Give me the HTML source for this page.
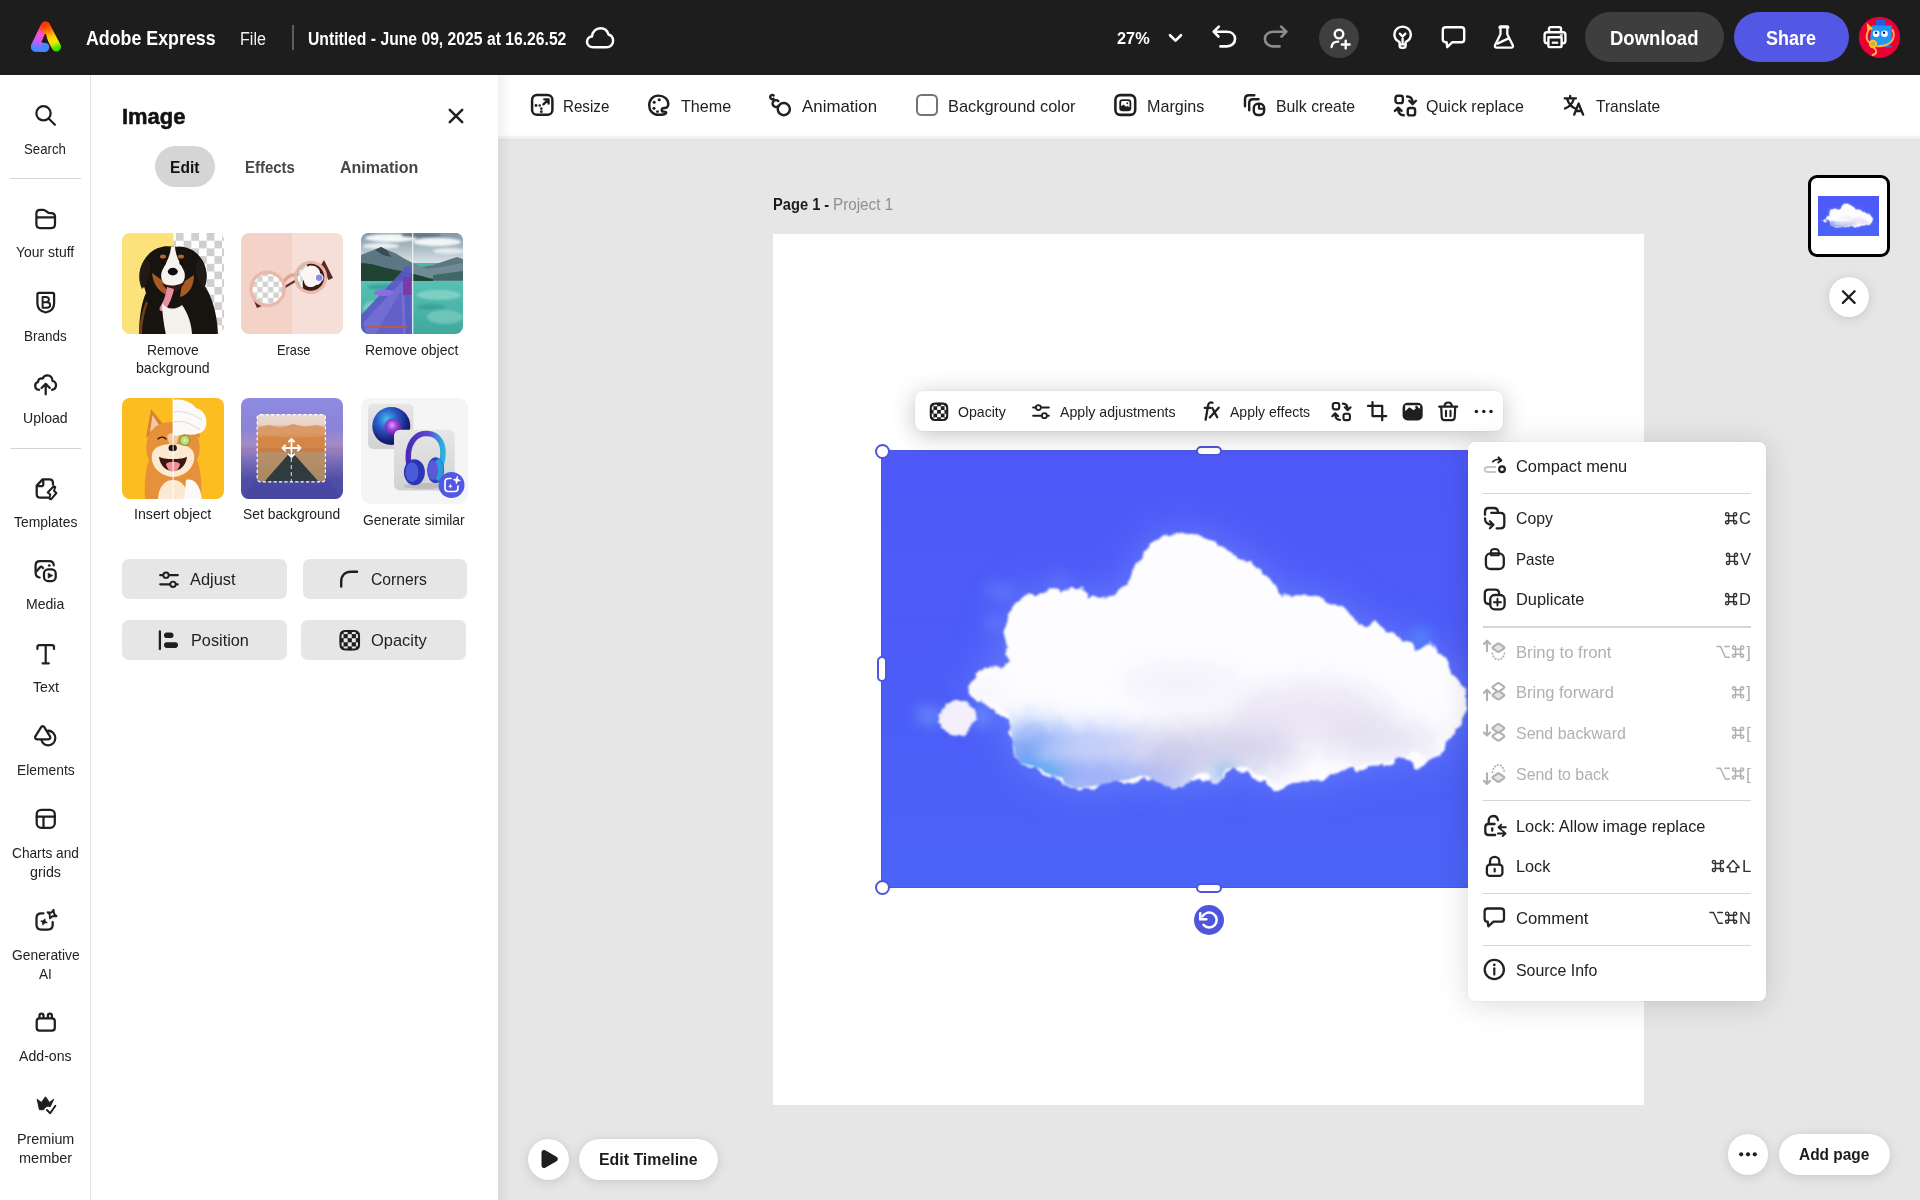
<!DOCTYPE html>
<html lang="en">
<head>
<meta charset="utf-8">
<title>Adobe Express</title>
<style>
*{box-sizing:border-box;margin:0;padding:0}
html,body{width:1920px;height:1200px;overflow:hidden}
body{position:relative;background:#e6e6e6;font-family:"Liberation Sans",sans-serif;color:#222;-webkit-font-smoothing:antialiased}
.abs{position:absolute}
svg{display:block;overflow:visible}
.t{position:absolute;white-space:nowrap;line-height:1}
/* top bar */
#topbar{position:absolute;left:0;top:0;width:1920px;height:75px;background:#1d1d1d}
#topbar .t{color:#fff}
/* sidebar */
#side{position:absolute;left:0;top:75px;width:91px;height:1125px;background:#fff;border-right:1px solid #e3e3e3}
.sl{position:absolute;left:0;width:90px;text-align:center;font-size:14.5px;line-height:19px;color:#222;letter-spacing:-0.25px}
.sdiv{position:absolute;left:10px;width:71px;height:1px;background:#d5d5d5}
.sic{position:absolute;left:33px;width:24px;height:24px}
/* panel */
#panel{position:absolute;left:91px;top:75px;width:407px;height:1125px;background:#fff}
.thumb{position:absolute;width:102px;height:102px;border-radius:8px;overflow:hidden}
.tl{position:absolute;text-align:center;font-size:14.5px;line-height:19px;color:#222;letter-spacing:-0.25px}
.pbtn{position:absolute;height:40px;background:#e6e6e6;border-radius:7px}

/* toolbar */
#tbar{position:absolute;left:498px;top:75px;width:1422px;height:63.500px;background:linear-gradient(to bottom,#fff 0,#fff 60px,#f3f3f3 61.500px,#efefef 63.500px);box-shadow:0 1px 2px rgba(0,0,0,.04)}

/* canvas */
#page{position:absolute;left:773px;top:234px;width:871px;height:871px;background:#fff}
/* floating bar */
#fbar{position:absolute;left:915px;top:391px;width:588px;height:40px;background:#fff;border-radius:8px;box-shadow:0 4px 24px rgba(0,0,0,.24),0 0 2px rgba(0,0,0,.10)}

/* menu */
#menu{position:absolute;left:1468px;top:442px;width:298px;height:559px;background:#fff;border-radius:7px;box-shadow:0 3px 30px rgba(0,0,0,.15),0 0 2px rgba(0,0,0,.10)}

.mdiv{position:absolute;left:15px;width:268px;height:1px;background:#d6d6d6}
.pill{position:absolute;background:#fff;border-radius:20.500px;box-shadow:0 2px 12px rgba(0,0,0,.13),0 0 2px rgba(0,0,0,.05)}
</style>
</head>
<body>

<!-- ================= TOP BAR ================= -->
<div id="topbar">
<svg class="abs" style="left:28px;top:18px;" width="36" height="37" viewBox="28 18 36 37">
<defs>
<linearGradient id="lgL" x1="45" y1="21" x2="36" y2="52" gradientUnits="userSpaceOnUse">
<stop offset="0" stop-color="#ff2400"/><stop offset=".18" stop-color="#ff3a3a"/><stop offset=".42" stop-color="#ff4fd0"/><stop offset=".68" stop-color="#c45bff"/><stop offset=".9" stop-color="#4a86ff"/><stop offset="1" stop-color="#2f8fff"/></linearGradient>
<linearGradient id="lgR" x1="46" y1="21" x2="58" y2="51" gradientUnits="userSpaceOnUse">
<stop offset="0" stop-color="#ff2400"/><stop offset=".28" stop-color="#ff6a00"/><stop offset=".52" stop-color="#ffd000"/><stop offset=".72" stop-color="#e8ee00"/><stop offset=".9" stop-color="#4ce000"/><stop offset="1" stop-color="#22d800"/></linearGradient>
<linearGradient id="lgB" x1="31" y1="48" x2="49" y2="48" gradientUnits="userSpaceOnUse">
<stop offset="0" stop-color="#c45bff"/><stop offset=".5" stop-color="#5a80ff"/><stop offset="1" stop-color="#2f8fff"/></linearGradient>
</defs>
<path d="M45.5 26.2 L35.6 46.9 L44.6 47.2" fill="none" stroke="url(#lgL)" stroke-width="9.4" stroke-linejoin="round" stroke-linecap="round"/>
<path d="M36 47.3 L44.4 47.5" fill="none" stroke="url(#lgB)" stroke-width="8.6" stroke-linecap="round"/>
<path d="M45.5 26.2 L35.6 46.9" fill="none" stroke="url(#lgL)" stroke-width="9.4" stroke-linecap="round"/>
<path d="M45.5 26.2 L56.4 46.9" fill="none" stroke="url(#lgR)" stroke-width="9.4" stroke-linecap="round"/>
<path d="M45.4 34 L41.9 42 L47.9 42.9 Z" fill="#1d1d1d" stroke="#1d1d1d" stroke-width="1" stroke-linejoin="round"/>
</svg>
<span class="t" style="left:85.7px;top:28px;font-size:20.5px;font-weight:700;color:#fff;transform:scaleX(0.8684);transform-origin:0 0;">Adobe Express</span>
<span class="t" style="left:240.4px;top:30px;font-size:18px;color:#f0f0f0;transform:scaleX(0.8937);transform-origin:0 0;">File</span>
<div class="abs" style="left:292px;top:25px;width:1.5px;height:25px;background:#5c5c5c"></div>
<span class="t" style="left:308.4px;top:31px;font-size:17.5px;font-weight:700;color:#fff;transform:scaleX(0.8973);transform-origin:0 0;">Untitled - June 09, 2025 at 16.26.52</span>
<svg class="abs" style="left:585px;top:25px;" width="30" height="25" viewBox="0 0 30 25"><path d="M8.2 22.3 C4.3 22.3 2 19.8 2 16.8 C2 13.9 4.2 11.7 7 11.5 C7.3 7 10.8 3.3 15.4 3.3 C19.3 3.3 22.5 5.9 23.5 9.5 C26.3 10.3 28.1 12.7 28.1 15.7 C28.1 19.4 25.3 22.3 21.6 22.3 Z" fill="none" stroke="#fff" stroke-width="2.500" stroke-linejoin="round"/></svg>
<span class="t" style="left:1116.7px;top:30px;font-size:16.5px;font-weight:700;color:#fff;transform:scaleX(0.9879);transform-origin:0 0;">27%</span>
<svg class="abs" style="left:1167px;top:32px;" width="17" height="12" viewBox="0 0 17 12"><path d="M3 3.2 L8.5 8.6 L14 3.2" fill="none" stroke="#fff" stroke-width="2.600" stroke-linecap="round" stroke-linejoin="round"/></svg>
<svg class="abs" style="left:1212px;top:25px;" width="25" height="23" viewBox="0 0 24.5 23"><path d="M6.6 1.6 L1.4 6.6 L6.2 11.6 M1.8 6.8 H14.5 C19.2 6.8 22.8 9.6 22.8 14 C22.8 18.4 19.2 21.4 14.5 21.4 H8.2" fill="none" stroke="#fff" stroke-width="2.600" stroke-linecap="round" stroke-linejoin="round"/></svg>
<svg class="abs" style="left:1263px;top:25px;" width="25" height="23" viewBox="0 0 24.5 23"><g transform="translate(24.5 0) scale(-1 1)"><path d="M6.6 1.6 L1.4 6.6 L6.2 11.6 M1.8 6.8 H14.5 C19.2 6.8 22.8 9.6 22.8 14 C22.8 18.4 19.2 21.4 14.5 21.4 H8.2" fill="none" stroke="#8c8c8c" stroke-width="2.600" stroke-linecap="round" stroke-linejoin="round"/></g></svg>
<div class="abs" style="left:1319px;top:17.5px;width:40px;height:40px;border-radius:20px;background:#3f3f3f"></div>
<svg class="abs" style="left:1327px;top:26px;" width="24" height="24" viewBox="0 0 24 24"><circle cx="12" cy="8.1" r="4.3" fill="none" stroke="#fff" stroke-width="2.400"/><path d="M4.6 21 C4.9 17.6 7.6 15.6 11.2 15.6" fill="none" stroke="#fff" stroke-width="2.400" stroke-linecap="round"/><path d="M18.7 14.6 V22.4 M14.8 18.5 H22.6" stroke="#fff" stroke-width="2.400" stroke-linecap="round"/></svg>
<svg class="abs" style="left:1391px;top:24px;" width="24" height="26" viewBox="0 0 24 26"><path d="M8.6 18.2 C5.2 16.6 3.4 14 3.4 10.6 C3.4 6 7 2.6 11.6 2.6 C16.2 2.6 19.8 6 19.8 10.6 C19.8 14 18 16.6 14.6 18.2 V21.6 C14.6 22.9 13.6 23.9 12.3 23.9 H10.9 C9.6 23.9 8.6 22.9 8.6 21.6 Z" fill="none" stroke="#fff" stroke-width="2.400" stroke-linejoin="round"/><path d="M8.8 9.6 L11.6 12.6 L14.4 9.6 M11.6 12.6 V18.6 M9 20.3 H14.2" fill="none" stroke="#fff" stroke-width="2.300" stroke-linecap="round"/></svg>
<svg class="abs" style="left:1440px;top:24px;" width="27" height="26" viewBox="0 0 27 26"><path d="M5.6 3.2 H21.4 C23.1 3.2 24.2 4.3 24.2 6 V15.4 C24.2 17.1 23.1 18.2 21.4 18.2 H12.4 L7.2 23.2 L6.6 18.2 H5.6 C3.9 18.2 2.8 17.1 2.8 15.4 V6 C2.8 4.3 3.9 3.2 5.6 3.2 Z" fill="none" stroke="#fff" stroke-width="2.400" stroke-linejoin="round"/></svg>
<svg class="abs" style="left:1492px;top:24px;" width="24" height="26" viewBox="0 0 24 26"><path d="M8.6 2.4 H15.2 C15.9 2.4 16.3 2.8 16.3 3.4 C16.3 4 15.9 4.4 15.3 4.5 V10.2 L20.8 21.2 C21.4 22.5 20.6 23.7 19.2 23.7 H4.6 C3.2 23.7 2.4 22.5 3 21.2 L8.5 10.2 V4.5 C7.9 4.4 7.5 4 7.5 3.4 C7.500 2.8 7.9 2.4 8.6 2.4 Z" fill="none" stroke="#fff" stroke-width="2.300" stroke-linejoin="round"/><path d="M8.6 2.5 H15.2 V4.4 H8.6 Z" fill="#fff"/><path d="M5.4 19.6 L16.6 14.4" stroke="#fff" stroke-width="2.300" stroke-linecap="round"/></svg>
<svg class="abs" style="left:1542px;top:24px;" width="26" height="26" viewBox="0 0 26 26"><path d="M7 8.2 V4.6 C7 3.7 7.6 3.1 8.5 3.1 H17.500 C18.4 3.1 19 3.700 19 4.6 V8.2" fill="none" stroke="#fff" stroke-width="2.400"/><path d="M6.2 19.2 H5 C3.600 19.2 2.600 18.2 2.600 16.8 V10.8 C2.600 9.3 3.600 8.300 5 8.300 H21 C22.4 8.300 23.400 9.3 23.400 10.8 V16.8 C23.400 18.2 22.4 19.2 21 19.2 H19.8" fill="none" stroke="#fff" stroke-width="2.400"/><path d="M6.400 13.2 H19.600 V21.800 C19.600 22.6 19.1 23.1 18.300 23.1 H7.700 C6.900 23.1 6.400 22.6 6.400 21.800 Z" fill="none" stroke="#fff" stroke-width="2.400" stroke-linejoin="round"/><path d="M9.8 17.6 H16.2 V19.8 H9.8 Z" fill="#fff"/><path d="M18.4 11 H20.4" stroke="#fff" stroke-width="1.600" stroke-linecap="round"/></svg>
<div class="abs" style="left:1585px;top:12px;width:139px;height:50px;border-radius:25px;background:#3e3e3e"></div>
<span class="t" style="left:1610.4px;top:29px;font-size:19.5px;font-weight:700;color:#fff;transform:scaleX(0.9494);transform-origin:0 0;">Download</span>
<div class="abs" style="left:1734px;top:12px;width:115px;height:50px;border-radius:25px;background:#5258e4"></div>
<span class="t" style="left:1766.4px;top:29px;font-size:19.5px;font-weight:700;color:#fff;transform:scaleX(0.9205);transform-origin:0 0;">Share</span>
<svg class="abs" style="left:1858px;top:16px;" width="43" height="43" viewBox="1858 16 43 43">
<circle cx="1879.5" cy="37.3" r="20.6" fill="#ea0034"/>
<path d="M1876.2 19.9 H1885.4 L1886.3 25.800 H1875.4 Z" fill="#1d5fe6"/>
<path d="M1871.6 25.4 H1891.8 V38 C1891.8 43 1886 46.8 1879 46.3 L1870 40.5 Z" fill="#2196f3"/>
<path d="M1884.5 45.600 H1891.4 V47.200 H1884.5 Z" fill="#3b78e8"/>
<circle cx="1876.2" cy="33.7" r="3.3" fill="#fff"/><circle cx="1884.5" cy="33.7" r="3.3" fill="#fff"/>
<circle cx="1876" cy="32.8" r="1.25" fill="#0a1f8f"/><circle cx="1884" cy="32.8" r="1.25" fill="#0a1f8f"/>
<path d="M1866.7 22.8 L1873 28.7 L1867.4 31.2 Z" fill="#ffd21a"/>
<path d="M1868.3 30.5 C1865.8 35 1866 40.500 1869.8 42.8" fill="none" stroke="#ffb347" stroke-width="1.900" stroke-linecap="round"/>
<circle cx="1873" cy="44" r="3.200" fill="#c9b23a" stroke="#ffc12e" stroke-width="1.900"/>
<path d="M1873.6 47.500 C1877.5 50.500 1877 54 1872.6 55" fill="none" stroke="#ffb347" stroke-width="1.900" stroke-linecap="round"/>
<path d="M1892.6 30 C1895.5 36 1893 42.500 1886 45 C1883 46 1880 46.3 1877 46.200" fill="none" stroke="#ffb347" stroke-width="1.900" stroke-linecap="round"/>
</svg>
</div>

<!-- ================= SIDEBAR ================= -->
<div id="side">
<svg class="abs" style="left:30px;top:25px;" width="30" height="30" viewBox="30 100 30 30"><circle cx="43.5" cy="113.3" r="7.15" fill="none" stroke="#1f1f1f" stroke-width="2.25"/><path d="M48.9 118.7 L54.9 124.7" fill="none" stroke="#1f1f1f" stroke-width="2.25" stroke-linecap="round" stroke-linejoin="round" /></svg>
<span class="t" style="left:24.4px;top:66px;font-size:15px;color:#222;transform:scaleX(0.8812);transform-origin:0 0;">Search</span>
<div class="sdiv" style="top:103px"></div>
<svg class="abs" style="left:30px;top:130px;" width="30" height="28" viewBox="30 205 30 28"><path d="M36.4 217.2 V213.6 C36.4 211.3 37.9 209.8 40.200 209.8 H43.200 C44.5 209.8 45.200 210.3 46.100 211.1 C47.5 212.400 48.100 213.1 49.700 213.1 H51.200 C53.500 213.1 55 214.6 55 216.9 V224.200 C55 226.5 53.500 228 51.200 228 H40.200 C37.9 228 36.4 226.500 36.4 224.200 Z M36.4 217.3 H55" fill="none" stroke="#1f1f1f" stroke-width="2.25" stroke-linecap="round" stroke-linejoin="round" /></svg>
<span class="t" style="left:16.4px;top:169px;font-size:15px;color:#222;transform:scaleX(0.9297);transform-origin:0 0;">Your stuff</span>
<svg class="abs" style="left:30px;top:213px;" width="30" height="30" viewBox="30 288 30 30"><path d="M39 292.8 H52.500 C53.500 292.8 54.100 293.400 54.100 294.4 V303.6 C54.100 308.500 50.500 311.600 45.750 312.500 C41 311.600 37.400 308.500 37.400 303.6 V294.4 C37.400 293.400 38 292.8 39 292.8 Z" fill="none" stroke="#1f1f1f" stroke-width="2.25" stroke-linecap="round" stroke-linejoin="round" /><path d="M42.600 297 V307.800 M42.600 297 H46 C47.800 297 48.900 298.100 48.900 299.600 C48.900 301.100 47.800 302.200 46 302.200 H42.600 M42.600 302.200 H46.900 C48.900 302.200 50.100 303.400 50.100 305 C50.100 306.600 48.900 307.800 46.900 307.800 H42.600 Z" fill="none" stroke="#1f1f1f" stroke-width="1.95" stroke-linecap="round" stroke-linejoin="round" /></svg>
<span class="t" style="left:24.4px;top:253px;font-size:15px;color:#222;transform:scaleX(0.8970);transform-origin:0 0;">Brands</span>
<svg class="abs" style="left:30px;top:295px;" width="30" height="28" viewBox="30 370 30 28"><path d="M39.200 389.800 C36.500 389.800 35.200 387.800 35.200 385.800 C35.200 383.900 36.400 382.400 38.100 381.900 C37.900 379.300 40.300 377.800 42.700 378.600 C43.400 376.600 45.200 375.400 47.500 375.400 C50.400 375.400 52.700 377.700 52.500 381 C54.700 381.300 56 383.100 56 385.300 C56 387.800 54.400 389.500 52 389.800" fill="none" stroke="#1f1f1f" stroke-width="2.25" stroke-linecap="round" stroke-linejoin="round" /><path d="M45.700 394.300 V384.200 M41.600 388 L45.700 383.900 L49.800 388" fill="none" stroke="#1f1f1f" stroke-width="2.25" stroke-linecap="round" stroke-linejoin="round" /></svg>
<span class="t" style="left:23.1px;top:335px;font-size:15px;color:#222;transform:scaleX(0.9390);transform-origin:0 0;">Upload</span>
<div class="sdiv" style="top:372.5px"></div>
<svg class="abs" style="left:30px;top:399px;" width="30" height="30" viewBox="30 474 30 30"><path d="M48 497.700 H40.500 C38.200 497.700 36.700 496.200 36.700 493.900 V485.600 L42.600 479.400 H49.400 C51.700 479.400 53 480.900 53 483.200 V484.600" fill="none" stroke="#1f1f1f" stroke-width="2.25" stroke-linecap="round" stroke-linejoin="round" /><path d="M43.300 480 V484.200 C43.300 485.500 42.600 486.200 41.300 486.200 H37.200" fill="none" stroke="#1f1f1f" stroke-width="2.25" stroke-linecap="round" stroke-linejoin="round" /><path d="M53.700 486.300 L47.700 492.500 L50.300 494.500 L49.300 498.500 L51.100 499.300 L56.400 493 L54 490.700 L55.300 487 Z" fill="none" stroke="#1f1f1f" stroke-width="1.95" stroke-linecap="round" stroke-linejoin="round" /></svg>
<span class="t" style="left:13.9px;top:439px;font-size:15px;color:#222;transform:scaleX(0.9269);transform-origin:0 0;">Templates</span>
<svg class="abs" style="left:30px;top:481px;" width="30" height="30" viewBox="30 556 30 30"><path d="M39.600 577.500 C36.500 577.100 35.600 575.300 35.600 572.800 V565.500 C35.600 562.700 37.200 561.200 40 561.200 H49.300 C52 561.200 53.600 562.600 53.800 565.300" fill="none" stroke="#1f1f1f" stroke-width="2.25" stroke-linecap="round" stroke-linejoin="round" /><path d="M36.300 571.400 L40.100 567.200 C40.800 566.500 41.600 566.500 42.300 567.200 L43 568.100" fill="none" stroke="#1f1f1f" stroke-width="2.25" stroke-linecap="round" stroke-linejoin="round" /><circle cx="49.3" cy="565.500" r="1.35" fill="#1f1f1f"/><rect x="44" y="569.300" width="11.700" height="11.700" rx="4" fill="none" stroke="#1f1f1f" stroke-width="2.25"/><path d="M48.100 573 V578.300 L52.800 575.600 Z" fill="#1f1f1f" stroke="#1f1f1f" stroke-width=".6" stroke-linejoin="round"/></svg>
<span class="t" style="left:26.4px;top:521px;font-size:15px;color:#222;transform:scaleX(0.9377);transform-origin:0 0;">Media</span>
<svg class="abs" style="left:30px;top:565px;" width="30" height="30" viewBox="30 640 30 30"><path d="M37.400 649 V647 C37.400 645.700 38.100 645.100 39.400 645.100 H52 C53.300 645.100 54 645.700 54 647 V649 M45.700 645.100 V663.300 M42.600 663.300 H48.800" fill="none" stroke="#1f1f1f" stroke-width="2.2" stroke-linecap="round" stroke-linejoin="round" /></svg>
<span class="t" style="left:32.6px;top:604px;font-size:15px;color:#222;transform:scaleX(0.9410);transform-origin:0 0;">Text</span>
<svg class="abs" style="left:30px;top:646px;" width="30" height="30" viewBox="30 721 30 30"><path d="M41 727.400 C41.800 725.800 43.600 725.800 44.400 727.400 L50 736.400 C50.800 737.900 50 739.300 48.300 739.300 H37.100 C35.400 739.300 34.600 737.900 35.400 736.400 Z" fill="none" stroke="#1f1f1f" stroke-width="2.25" stroke-linecap="round" stroke-linejoin="round" /><path d="M47.400 730.800 C52.100 730.300 55.300 733.900 55.300 738.300 C55.300 742.200 52.200 745.300 48.300 745.300 C45 745.300 42.300 743.100 41.400 739.800" fill="none" stroke="#1f1f1f" stroke-width="2.25" stroke-linecap="round" stroke-linejoin="round" /></svg>
<span class="t" style="left:16.9px;top:687px;font-size:15px;color:#222;transform:scaleX(0.9217);transform-origin:0 0;">Elements</span>
<svg class="abs" style="left:30px;top:729px;" width="30" height="30" viewBox="30 804 30 30"><rect x="36.700" y="809.800" width="18.100" height="18" rx="4.600" fill="none" stroke="#1f1f1f" stroke-width="2.25"/><path d="M36.700 816.700 H54.800 M43.500 816.700 V827.800" fill="none" stroke="#1f1f1f" stroke-width="2.25" stroke-linecap="round" stroke-linejoin="round" /></svg>
<span class="t" style="left:12.0px;top:770px;font-size:15px;color:#222;transform:scaleX(0.9121);transform-origin:0 0;">Charts and</span>
<span class="t" style="left:30.2px;top:789px;font-size:15px;color:#222;transform:scaleX(0.9524);transform-origin:0 0;">grids</span>
<svg class="abs" style="left:30px;top:830px;" width="30" height="30" viewBox="30 905 30 30"><path d="M43.500 913.300 H41.300 C38.300 913.300 36.500 915.100 36.500 918.100 V924.700 C36.500 927.700 38.300 929.500 41.300 929.500 H47.900 C50.900 929.500 52.700 927.700 52.700 924.700 V922" fill="none" stroke="#1f1f1f" stroke-width="2.25" stroke-linecap="round" stroke-linejoin="round" /><path d="M53.500 909.700 L54.200 914 L56.600 916.200 L52.400 916.200 L50 918.400 L49.700 914.300 L47.500 912.300 L51.500 912.600 Z" fill="none" stroke="#1f1f1f" stroke-width="1.9" stroke-linejoin="round"/><path d="M44.900 919.200 L45.100 921.400 L47 922.700 L44.800 922.800 L42.800 924.700 L42.800 922.400 L41 921 L43.300 920.900 Z" fill="#1f1f1f" stroke="#1f1f1f" stroke-width="1.1" stroke-linejoin="round"/></svg>
<span class="t" style="left:12.0px;top:872px;font-size:15px;color:#222;transform:scaleX(0.9216);transform-origin:0 0;">Generative</span>
<span class="t" style="left:38.7px;top:891px;font-size:15px;color:#222;transform:scaleX(0.9101);transform-origin:0 0;">AI</span>
<svg class="abs" style="left:30px;top:933px;" width="30" height="28" viewBox="30 1008 30 28"><rect x="36.700" y="1018.300" width="18.100" height="12.200" rx="2.800" fill="none" stroke="#1f1f1f" stroke-width="2.25"/><path d="M39.500 1018 V1015.800 C39.500 1014.400 40.300 1013.700 41.500 1013.700 C42.700 1013.700 43.500 1014.400 43.500 1015.800 V1018 M47.900 1018 V1015.800 C47.900 1014.400 48.700 1013.700 49.900 1013.700 C51.100 1013.700 51.900 1014.400 51.900 1015.800 V1018" fill="none" stroke="#1f1f1f" stroke-width="2.25" stroke-linecap="round" stroke-linejoin="round" /></svg>
<span class="t" style="left:19.2px;top:973px;font-size:15px;color:#222;transform:scaleX(0.9414);transform-origin:0 0;">Add-ons</span>
<svg class="abs" style="left:30px;top:1015px;" width="30" height="30" viewBox="30 1090 30 30"><path d="M37.200 1099.200 L41.400 1102.500 L45.500 1096.800 L49.500 1102.500 L53.700 1099.200 L50.200 1106.800 C48.200 1105.800 45.800 1106.300 44.600 1108.300 L43.700 1109.700 H39.400 Z" fill="#1f1f1f" stroke="#1f1f1f" stroke-width="1" stroke-linejoin="round"/><path d="M46.900 1110 L50.200 1113.200 L55.400 1105.700" fill="none" stroke="#1f1f1f" stroke-width="1.9" stroke-linecap="round" stroke-linejoin="round" /></svg>
<span class="t" style="left:16.5px;top:1056px;font-size:15px;color:#222;transform:scaleX(0.9550);transform-origin:0 0;">Premium</span>
<span class="t" style="left:18.9px;top:1075px;font-size:15px;color:#222;transform:scaleX(0.9664);transform-origin:0 0;">member</span>
</div>

<!-- ================= IMAGE PANEL ================= -->
<div id="panel">
<span class="t" style="left:30.9px;top:31px;font-size:22.5px;font-weight:700;color:#111;transform:scaleX(0.9750);transform-origin:0 0;-webkit-text-stroke:0.550px #111;">Image</span>
<svg class="abs" style="left:354px;top:30px;" width="22" height="22" viewBox="445 105 22 22"><path d="M449.8 109.8 L462.2 122.2 M462.2 109.8 L449.8 122.2" fill="none" stroke="#1f1f1f" stroke-width="2.5" stroke-linecap="round" stroke-linejoin="round"/></svg>
<div class="abs" style="left:64px;top:71px;width:60px;height:40.5px;background:#d5d5d5;border-radius:20.500px"></div>
<span class="t" style="left:79.2px;top:84px;font-size:16.5px;font-weight:700;color:#111;transform:scaleX(0.9428);transform-origin:0 0;">Edit</span>
<span class="t" style="left:153.9px;top:84px;font-size:16.5px;font-weight:700;color:#464646;transform:scaleX(0.9068);transform-origin:0 0;">Effects</span>
<span class="t" style="left:249.2px;top:84px;font-size:16.5px;font-weight:700;color:#464646;transform:scaleX(0.9717);transform-origin:0 0;">Animation</span>
<div class="thumb" style="left:31px;top:157.5px;width:101.500px;height:101.500px"><svg width="102" height="102" viewBox="0 0 102 102" style="display:block"><defs><pattern id="ck1" width="15.4" height="15.4" patternUnits="userSpaceOnUse"><rect width="15.4" height="15.4" fill="#ffffff"/><rect x="7.7" width="7.7" height="7.7" fill="#cfcfcf"/><rect y="7.7" width="7.7" height="7.7" fill="#cfcfcf"/></pattern></defs>
<rect width="102" height="102" fill="#fbe27a"/>
<rect x="51.300" width="51" height="102" fill="url(#ck1)"/>
<path d="M21 50 C16 44 18 30 26 22 C33 14 44 12 52 14 C62 12 72 16 78 24 C85 32 86 44 82 52 C90 62 96 84 96 102 H17 C17 84 20 68 24 60 Z" fill="#17130f"/>
<path d="M24 26 C17 32 15 46 20 56 C25 52 28 42 29 32 Z" fill="#221a14"/>
<path d="M77 26 C85 32 87 46 82 56 C77 52 74 42 73 32 Z" fill="#221a14"/>
<path d="M30 40 C31 52 38 60 46 62 L44 50 Z" fill="#a85a24"/>
<path d="M72 42 C72 54 66 62 58 64 L60 50 Z" fill="#a85a24"/>
<ellipse cx="41" cy="23.500" rx="3" ry="2" fill="#b5672a"/><ellipse cx="59" cy="23.500" rx="3" ry="2" fill="#b5672a"/>
<path d="M49 14 C48 24 44 30 40 38 C37 46 42 54 51 54 C60 54 65 46 62 38 C58 30 54 24 53 14 Z" fill="#f7f3ee"/>
<ellipse cx="42" cy="30" rx="2.200" ry="1.900" fill="#120d0a"/><ellipse cx="59.500" cy="30" rx="2.200" ry="1.900" fill="#120d0a"/>
<ellipse cx="50.800" cy="38.600" rx="5" ry="3.800" fill="#0e0b0a"/>
<path d="M40 50 C44 58 50 60 54 58 C58 56 62 52 63 48 C58 53 46 54 40 50 Z" fill="#3a1414"/>
<path d="M45 54 C44 62 41 70 38 74 C36 78 41 80 44 76 C48 70 51 62 52 56 Z" fill="#e98ea0"/>
<path d="M40 70 C44 76 52 78 60 72 C66 80 70 92 70 102 H44 C42 92 40 80 40 70 Z" fill="#f4f0ea"/>
<path d="M26 70 C22 80 20 92 20 102 H17 C17 90 20 78 24 68 Z" fill="#a85a24" opacity=".6"/>
</svg></div>
<div class="thumb" style="left:150px;top:157.5px;width:101.500px;height:101.500px"><svg width="102" height="102" viewBox="0 0 102 102" style="display:block"><defs><pattern id="ck2" width="10.8" height="10.8" patternUnits="userSpaceOnUse"><rect width="10.8" height="10.8" fill="#ffffff"/><rect x="5.4" width="5.4" height="5.4" fill="#d2d2d2"/><rect y="5.4" width="5.4" height="5.4" fill="#d2d2d2"/></pattern>
<clipPath id="t2l"><circle cx="26.600" cy="55.900" r="15"/></clipPath><clipPath id="t2r"><circle cx="69.700" cy="44.300" r="13.500"/></clipPath></defs>
<rect width="102" height="102" fill="#f3d3c8"/><rect x="51" width="51" height="102" fill="#f6dfd8"/>
<path d="M10.500 62 L16 75 L21 73 L15 60 Z" fill="#5a2626"/>
<path d="M83 27 L92 45 L87.500 47 L80 32 Z" fill="#5a2626"/>
<path d="M42 50 C46 43 52 41 57 42" fill="none" stroke="#dca899" stroke-width="3.600" stroke-linecap="round"/>
<path d="M44 54 L54 48" stroke="#6a3030" stroke-width="2.200" stroke-linecap="round"/>
<circle cx="26.600" cy="55.900" r="18.300" fill="#e9b8aa"/>
<circle cx="69.700" cy="44.300" r="16.600" fill="#e9b8aa"/>
<g clip-path="url(#t2l)"><rect x="8" y="38" width="40" height="40" fill="url(#ck2)"/></g>
<g clip-path="url(#t2r)"><rect x="54" y="28" width="34" height="34" fill="#3b1a1a"/><path d="M54 28 H69 C63 34 67 40 63 46 C59 52 65 56 61 62 H54 Z" fill="url(#ck2)"/><path d="M65 34 C71 30 79 34 79 40 C83 44 81 52 75 52 C71 56 63 54 63 48 C59 44 61 36 65 34 Z" fill="#fbf6f3"/></g>
<circle cx="78.200" cy="44.700" r="4.300" fill="#fff"/><circle cx="78.200" cy="44.700" r="3.300" fill="#8b8de8"/>
</svg></div>
<div class="thumb" style="left:270px;top:157.5px;width:101.500px;height:101.500px"><svg width="102" height="102" viewBox="0 0 102 102" style="display:block"><defs><linearGradient id="t3w" x1="0" y1="0" x2="0" y2="1"><stop offset="0" stop-color="#3aa69c"/><stop offset=".5" stop-color="#56c0b3"/><stop offset="1" stop-color="#3fa89d"/></linearGradient>
<linearGradient id="t3s" x1="0" y1="0" x2="0" y2="1"><stop offset="0" stop-color="#7f97a4"/><stop offset="1" stop-color="#d9e2e6"/></linearGradient>
<filter id="t3b"><feGaussianBlur stdDeviation="1.200"/></filter></defs>
<rect width="102" height="102" fill="url(#t3w)"/>
<rect width="102" height="30" fill="url(#t3s)"/>
<g filter="url(#t3b)"><ellipse cx="30" cy="5" rx="26" ry="4" fill="#f4f7f8"/><ellipse cx="76" cy="9" rx="24" ry="4" fill="#f1f5f6"/><ellipse cx="60" cy="2" rx="20" ry="3" fill="#62798a"/><ellipse cx="20" cy="13" rx="18" ry="3" fill="#e8eef0"/><ellipse cx="88" cy="18" rx="16" ry="3" fill="#e3eaed"/></g>
<path d="M0 22 L10 18 L20 14 L26 17 L34 20 L44 26 L52 30 L60 34 L72 32 L84 28 L96 24 L102 26 V48 H0 Z" fill="#5d7683"/>
<path d="M14 17 L20 14 L26 17 L30 24 L22 22 Z" fill="#3a4c58"/>
<path d="M52 30 L66 36 L80 34 L102 30 V46 H52 Z" fill="#718b96"/>
<path d="M0 30 C10 30 20 34 30 36 C40 38 50 40 72 46 L72 48 H0 Z" fill="#1f4434"/>
<path d="M72 42 L102 38 V47 H72 Z" fill="#3d6a66"/>
<g filter="url(#t3b)" opacity=".55"><ellipse cx="78" cy="62" rx="22" ry="5" fill="#a6e2d8"/><ellipse cx="84" cy="84" rx="18" ry="7" fill="#8fd6cb"/><ellipse cx="70" cy="74" rx="14" ry="3" fill="#2f958b"/><ellipse cx="24" cy="54" rx="18" ry="3" fill="#2a8f86"/><ellipse cx="12" cy="76" rx="10" ry="8" fill="#9fded4"/></g>
<path d="M0 82 L45 34 C47 32 50 33 50.500 36 L51 102 H0 Z" fill="#5a58c6" opacity=".93"/>
<path d="M2 90 L43 46 L45 102 H6 Z" fill="#7470d6" opacity=".85"/><path d="M14 102 L40 58 L42 102 Z" fill="#5f5ac4" opacity=".7"/>
<path d="M42 44 H50.500 V62 H42 Z" fill="#7a3aa8"/>
<path d="M6 94 H46" stroke="#b0604a" stroke-width="2"/>
<ellipse cx="23" cy="59.700" rx="10" ry="3.200" fill="#8a6fe0"/>
<rect x="51" width="1.300" height="102" fill="#e8f4f2" opacity=".9"/>
</svg></div>
<div class="thumb" style="left:31px;top:322.5px;width:101.500px;height:101.500px"><svg width="102" height="102" viewBox="0 0 102 102" style="display:block"><defs><clipPath id="t4r"><rect x="51" width="51" height="102"/></clipPath></defs>
<rect width="102" height="102" fill="#fbbd1f"/>
<path d="M24 40 L29 11 L41 26 Z" fill="#d9822f"/><path d="M28 34 L30.500 17 L37 27 Z" fill="#f3c9a4"/>
<path d="M78 40 L73 14 L62 27 Z" fill="#d9822f"/>
<path d="M23 102 C22 84 24 70 27 62 C22 52 24 38 32 30 C40 22 60 22 70 30 C78 38 80 52 75 62 C79 72 80 86 79 102 Z" fill="#e6903a"/>
<path d="M30 56 C32 48 42 46 50.500 46 C60 46 70 48 72 56 C74 66 66 78 51 79 C36 78 28 66 30 56 Z" fill="#fbe9d2"/>
<path d="M36 102 C36 90 42 82 51 82 C60 82 66 90 66 102 Z" fill="#fbe9d2"/>
<path d="M45 38 C47 34 55 34 57 38 L54 48 H48 Z" fill="#f3c9a4"/>
<ellipse cx="50.700" cy="50" rx="4.200" ry="3.200" fill="#1a120e"/>
<path d="M37 58.800 C42 62 60 62 65 58.800 C64 68 58 73 51 73 C44 73 38 68 37 58.800 Z" fill="#3a1810"/>
<path d="M44 66 C46 63 56 63 58 66 C57 71 54 73.500 51 73.500 C48 73.500 45 71 44 66 Z" fill="#f08c9c"/>
<path d="M36 41 C38 38.500 42 38.500 44 41" fill="none" stroke="#2a1a12" stroke-width="1.300" stroke-linecap="round"/>
<g clip-path="url(#t4r)">
<path d="M51 2 C60 0 70 4 74 10 C82 12 86 20 84 28 C82 36 72 38 62 36 C58 38 54 38 51 37 Z" fill="#fbfaf8"/>
<path d="M51 14 C60 12 72 16 80 22 M51 24 C60 22 70 26 78 32" fill="none" stroke="#e4e0da" stroke-width="1.200"/>
<path d="M64 82 C70 80 78 84 80 102 H62 Z" fill="#fbfaf8"/>
</g>
<circle cx="62.800" cy="42.400" r="5.600" fill="#7fa33c"/><circle cx="62.800" cy="42.400" r="4.300" fill="#c4da7c"/><circle cx="62.800" cy="42.400" r="1.600" fill="#dcebaa"/>
<rect x="50.600" width="1" height="102" fill="#fff" opacity=".95"/>
</svg></div>
<div class="thumb" style="left:150px;top:322.5px;width:101.500px;height:101.500px"><svg width="102" height="102" viewBox="0 0 102 102" style="display:block"><defs><linearGradient id="t5g" x1="0" y1="0" x2="0" y2="1"><stop offset="0" stop-color="#8e8be2"/><stop offset=".3" stop-color="#8a84d6"/><stop offset=".45" stop-color="#a58bc6"/><stop offset=".6" stop-color="#7c70b8"/><stop offset=".8" stop-color="#4f4ea6"/><stop offset="1" stop-color="#4a4aa8"/></linearGradient>
<linearGradient id="t5h" x1="0" y1="0" x2="0" y2="1"><stop offset="0" stop-color="#e9dbd3"/><stop offset=".16" stop-color="#e8d3c4"/><stop offset=".2" stop-color="#dba070"/><stop offset=".4" stop-color="#d98c4c"/><stop offset=".55" stop-color="#c87a40"/><stop offset=".56" stop-color="#b89068"/><stop offset="1" stop-color="#a98862"/></linearGradient>
<clipPath id="t5c"><rect x="16.200" y="16.600" width="68.200" height="67.200" rx="3"/></clipPath></defs>
<rect width="102" height="102" fill="url(#t5g)"/>
<path d="M0 50 H102 V56 H0 Z" fill="#9a7ab8" opacity=".5"/>
<path d="M0 102 L30 62 H72 L102 102 Z" fill="#45449c" opacity=".55"/>
<g clip-path="url(#t5c)"><rect x="16" y="16" width="69" height="68" fill="url(#t5h)"/>
<path d="M16 30 L28 27 L40 30 L52 26 L64 29 L76 27 L85 30 V36 H16 Z" fill="#d99a68"/>
<path d="M16 40 C30 36 50 42 85 38 V50 H16 Z" fill="#d48646"/>
<path d="M50.300 53 L16 92 H85 Z" fill="#2f3b3c"/>
<path d="M50.300 53 L50.300 84" stroke="#e8e4d8" stroke-width="1" stroke-dasharray="4 3"/>
</g>
<rect x="16.200" y="16.600" width="68.200" height="67.200" rx="3" fill="none" stroke="#fff" stroke-width="1.200" stroke-dasharray="3.200 2.200"/>
<path d="M50.500 41 V59 M41.500 50 H59.500 M47.800 43.700 L50.500 41 L53.200 43.700 M47.800 56.300 L50.500 59 L53.200 56.300 M44.200 47.300 L41.500 50 L44.200 52.700 M56.800 47.300 L59.500 50 L56.800 52.700" fill="none" stroke="#fff" stroke-width="1.800" stroke-linecap="round" stroke-linejoin="round"/>
</svg></div>
<div class="thumb" style="left:269.5px;top:322.5px;width:107px;height:106px;border-radius:9px;overflow:visible"><svg width="107" height="106" viewBox="0 0 107 106" style="display:block"><defs>
<radialGradient id="t6l" cx=".38" cy=".32" r=".8"><stop offset="0" stop-color="#3fc0ea"/><stop offset=".35" stop-color="#2a5ac8"/><stop offset=".7" stop-color="#1a1f7a"/><stop offset="1" stop-color="#101040"/></radialGradient>
<radialGradient id="t6p" cx=".45" cy=".4" r=".7"><stop offset="0" stop-color="#e0a0ff"/><stop offset=".4" stop-color="#9a40d8"/><stop offset="1" stop-color="#3a1a80"/></radialGradient>
<linearGradient id="t6b" x1="0" y1="0" x2="1" y2="0"><stop offset="0" stop-color="#4a2ab8"/><stop offset=".6" stop-color="#5a4ad8"/><stop offset="1" stop-color="#2ab4dc"/></linearGradient>
<linearGradient id="t6c" x1="0" y1="0" x2="0" y2="1"><stop offset="0" stop-color="#e6e6e6"/><stop offset="1" stop-color="#d2d2d2"/></linearGradient>
</defs>
<rect width="107" height="106" rx="9" fill="#f5f5f5"/>
<rect x="7" y="5.800" width="45.400" height="45.200" rx="5" fill="url(#t6c)"/>
<circle cx="30.300" cy="28" r="19" fill="url(#t6l)"/>
<circle cx="32" cy="29" r="8.500" fill="url(#t6p)"/>
<rect x="33" y="31.800" width="60.800" height="60.700" rx="6" fill="url(#t6c)"/>
<ellipse cx="64" cy="88" rx="22" ry="3" fill="#bdbdbd"/>
<path d="M48 68 C44 44 56 35 66 35.500 C78 36 86 46 80 68" fill="none" stroke="url(#t6b)" stroke-width="5.500" stroke-linecap="round"/>
<ellipse cx="53.400" cy="74.200" rx="10.500" ry="13" fill="#2a36b4"/><ellipse cx="51" cy="74.200" rx="6.500" ry="10" fill="#4a5ad8"/>
<ellipse cx="74.600" cy="72.300" rx="8.500" ry="13" fill="#3440c0"/><ellipse cx="77.500" cy="72" rx="5" ry="11" fill="#2a9ad8"/><ellipse cx="72" cy="72.300" rx="5" ry="10" fill="#5a5ad8"/>
<circle cx="90.500" cy="87" r="13" fill="#5258e4"/>
<path d="M90 80.500 H87.500 C85.300 80.500 84 81.800 84 84 V90 C84 92.200 85.300 93.500 87.500 93.500 H93.500 C95.700 93.500 97 92.200 97 90 V88" fill="none" stroke="#fff" stroke-width="1.700" stroke-linecap="round"/>
<path d="M96.300 78 L97 81.300 L99.600 82.600 L96.600 83.200 L95.300 86 L94.600 82.800 L92 81.600 L95 81 Z" fill="#fff" stroke="#fff" stroke-width=".5" stroke-linejoin="round"/>
<path d="M89.500 85.500 L90 87.500 L91.800 88.300 L90 88.900 L89.300 90.800 L88.700 88.900 L87 88.200 L88.800 87.500 Z" fill="#fff"/>
</svg></div>
<span class="t" style="left:55.9px;top:267px;font-size:15px;color:#222;transform:scaleX(0.9244);transform-origin:0 0;">Remove</span>
<span class="t" style="left:44.6px;top:285px;font-size:15px;color:#222;transform:scaleX(0.9397);transform-origin:0 0;">background</span>
<span class="t" style="left:185.9px;top:267px;font-size:15px;color:#222;transform:scaleX(0.8531);transform-origin:0 0;">Erase</span>
<span class="t" style="left:273.9px;top:267px;font-size:15px;color:#222;transform:scaleX(0.9335);transform-origin:0 0;">Remove object</span>
<span class="t" style="left:42.9px;top:431px;font-size:15px;color:#222;transform:scaleX(0.9446);transform-origin:0 0;">Insert object</span>
<span class="t" style="left:152.2px;top:431px;font-size:15px;color:#222;transform:scaleX(0.9246);transform-origin:0 0;">Set background</span>
<span class="t" style="left:272.1px;top:437px;font-size:15px;color:#222;transform:scaleX(0.9239);transform-origin:0 0;">Generate similar</span>
<div class="abs" style="left:31px;top:484.25px;width:165px;height:40px;background:#e6e6e6;border-radius:7px"></div>
<div class="abs" style="left:211.5px;top:484.25px;width:164.5px;height:40px;background:#e6e6e6;border-radius:7px"></div>
<div class="abs" style="left:31px;top:545px;width:165px;height:40px;background:#e6e6e6;border-radius:7px"></div>
<div class="abs" style="left:210.25px;top:545px;width:164.5px;height:40px;background:#e6e6e6;border-radius:7px"></div>
<svg class="abs" style="left:66px;top:494px;" width="24" height="22" viewBox="157 569 24 22"><path d="M160.300 575.200 H162.800 M169.200 575.200 H177.700 M160.300 584.300 H169.800 M176.200 584.300 H177.700" fill="none" stroke="#1f1f1f" stroke-width="2.3" stroke-linecap="round" stroke-linejoin="round"/><circle cx="166" cy="575.200" r="2.700" fill="none" stroke="#1f1f1f" stroke-width="1.900"/><circle cx="173" cy="584.300" r="2.700" fill="none" stroke="#1f1f1f" stroke-width="1.900"/></svg>
<span class="t" style="left:99.4px;top:496px;font-size:17px;color:#222;transform:scaleX(0.9659);transform-origin:0 0;">Adjust</span>
<svg class="abs" style="left:246px;top:492px;" width="24" height="24" viewBox="337 567 24 24"><path d="M341.200 586.500 V581.500 C341.200 575.500 345 571.700 351 571.700 H357" fill="none" stroke="#1f1f1f" stroke-width="2.4" stroke-linecap="round" stroke-linejoin="round"/></svg>
<span class="t" style="left:279.6px;top:496px;font-size:17px;color:#222;transform:scaleX(0.9250);transform-origin:0 0;">Corners</span>
<svg class="abs" style="left:65px;top:552px;" width="25" height="26" viewBox="156 627 25 26"><path d="M159.900 631.500 V649" fill="none" stroke="#1f1f1f" stroke-width="2.3" stroke-linecap="round" stroke-linejoin="round"/><rect x="164" y="632.500" width="9.500" height="5.600" rx="2.800" fill="#1f1f1f"/><rect x="164" y="642.300" width="14" height="5.600" rx="2.800" fill="#1f1f1f"/></svg>
<span class="t" style="left:99.7px;top:557px;font-size:17px;color:#222;transform:scaleX(0.9567);transform-origin:0 0;">Position</span>
<svg class="abs" style="left:246px;top:552px;" width="26" height="26" viewBox="337 627 26 26"><defs><clipPath id="oc339_630"><rect x="339.5" y="630" width="20.5" height="20.5" rx="5.54"/></clipPath></defs><g clip-path="url(#oc339_630)"><rect x="339.45" y="629.95" width="4.20" height="4.20" fill="#1f1f1f"/><rect x="339.45" y="638.15" width="4.20" height="4.20" fill="#1f1f1f"/><rect x="339.45" y="646.35" width="4.20" height="4.20" fill="#1f1f1f"/><rect x="343.55" y="634.05" width="4.20" height="4.20" fill="#1f1f1f"/><rect x="343.55" y="642.25" width="4.20" height="4.20" fill="#1f1f1f"/><rect x="347.65" y="629.95" width="4.20" height="4.20" fill="#1f1f1f"/><rect x="347.65" y="638.15" width="4.20" height="4.20" fill="#1f1f1f"/><rect x="347.65" y="646.35" width="4.20" height="4.20" fill="#1f1f1f"/><rect x="351.75" y="634.05" width="4.20" height="4.20" fill="#1f1f1f"/><rect x="351.75" y="642.25" width="4.20" height="4.20" fill="#1f1f1f"/><rect x="355.85" y="629.95" width="4.20" height="4.20" fill="#1f1f1f"/><rect x="355.85" y="638.15" width="4.20" height="4.20" fill="#1f1f1f"/><rect x="355.85" y="646.35" width="4.20" height="4.20" fill="#1f1f1f"/></g><rect x="340.5" y="631" width="18.5" height="18.5" rx="4.74" fill="none" stroke="#1f1f1f" stroke-width="2.100"/></svg>
<span class="t" style="left:280.1px;top:557px;font-size:17px;color:#222;transform:scaleX(0.9656);transform-origin:0 0;">Opacity</span>
</div>

<!-- ================= TOOLBAR ================= -->
<div id="tbar">
<svg class="abs" style="left:31px;top:17px;" width="27" height="26" viewBox="529 92 27 26"><rect x="532.100" y="95.100" width="20.300" height="19.700" rx="4.800" fill="none" stroke="#1f1f1f" stroke-width="2.500"/><path d="M543.400 104.400 L548.300 99.600 M544.200 99.300 H548.600 V103.700" fill="none" stroke="#1f1f1f" stroke-width="2.3" stroke-linecap="round" stroke-linejoin="round"/><circle cx="536" cy="105.500" r="1.400" fill="#1f1f1f"/><circle cx="539.700" cy="105.500" r="1.300" fill="#1f1f1f"/><circle cx="541.300" cy="108.600" r="1.300" fill="#1f1f1f"/><circle cx="541.300" cy="111.700" r="1.400" fill="#1f1f1f"/></svg>
<span class="t" style="left:65.4px;top:23px;font-size:17px;color:#222;transform:scaleX(0.8915);transform-origin:0 0;">Resize</span>
<svg class="abs" style="left:148px;top:17px;" width="26" height="26" viewBox="646 92 26 26"><path d="M658.400 95.600 C664.300 95.600 668.300 99.400 668.300 104 C668.300 107 666.300 108.200 664.300 108 C662.700 107.900 661.700 108.700 661.700 109.900 C661.700 111 662.600 111.600 663.900 111.600 C665.900 111.600 666.600 112.400 665.900 113.300 C664.700 114.600 662 114.800 658.400 114.800 C653 114.800 649.200 110.800 649.200 105.200 C649.200 99.600 653 95.600 658.400 95.600 Z" fill="none" stroke="#1f1f1f" stroke-width="2.45" stroke-linecap="round" stroke-linejoin="round"/><circle cx="659.200" cy="99.700" r="1.550" fill="#1f1f1f"/><circle cx="654.200" cy="102.300" r="1.550" fill="#1f1f1f"/><circle cx="654" cy="108.200" r="1.550" fill="#1f1f1f"/><circle cx="657.500" cy="111.600" r="1.450" fill="#1f1f1f"/></svg>
<span class="t" style="left:182.7px;top:23px;font-size:17px;color:#222;transform:scaleX(0.9504);transform-origin:0 0;">Theme</span>
<svg class="abs" style="left:269px;top:17px;" width="27" height="26" viewBox="767 92 27 26"><circle cx="783.800" cy="109.100" r="6.100" fill="none" stroke="#1f1f1f" stroke-width="2.450"/><path d="M778.300 101.100 A3.400 3.400 0 1 0 778.300 106" fill="none" stroke="#1f1f1f" stroke-width="2.4" stroke-linecap="round" stroke-linejoin="round"/><path d="M773.700 95.500 A2.100 2.100 0 1 0 773.700 98.700" fill="none" stroke="#1f1f1f" stroke-width="2.3" stroke-linecap="round" stroke-linejoin="round"/></svg>
<span class="t" style="left:303.9px;top:23px;font-size:17px;color:#222;transform:scaleX(0.9925);transform-origin:0 0;">Animation</span>
<div class="abs" style="left:417.9px;top:19.200000000000003px;width:22px;height:22px;border:2.200px solid #737373;border-radius:5.500px"></div>
<span class="t" style="left:450.4px;top:23px;font-size:17px;color:#222;transform:scaleX(0.9634);transform-origin:0 0;">Background color</span>
<svg class="abs" style="left:614px;top:17px;" width="27" height="26" viewBox="1112 92 27 26"><rect x="1115.400" y="95.100" width="19.800" height="19.800" rx="4.800" fill="none" stroke="#1f1f1f" stroke-width="2.550"/><rect x="1120.200" y="100.200" width="10.200" height="10.200" rx="2.400" fill="none" stroke="#1f1f1f" stroke-width="1.800"/><path d="M1120.600 106.600 L1123.500 104.600 L1126 106.800 L1127.600 105.900 L1130 107.600 V109.200 C1130 109.800 1129.700 110 1129.200 110 H1121.400 C1120.900 110 1120.600 109.800 1120.600 109.200 Z" fill="#1f1f1f"/><circle cx="1127.300" cy="103.200" r="0.950" fill="#1f1f1f"/></svg>
<span class="t" style="left:648.9px;top:23px;font-size:17px;color:#222;transform:scaleX(0.9498);transform-origin:0 0;">Margins</span>
<svg class="abs" style="left:744px;top:17px;" width="26" height="26" viewBox="1242 92 26 26"><path d="M1245 106.200 V99.200 C1245 96.700 1246.400 95.300 1248.900 95.300 H1254.300" fill="none" stroke="#1f1f1f" stroke-width="2.45" stroke-linecap="round" stroke-linejoin="round"/><path d="M1249.200 110.300 V103.100 C1249.200 100.600 1250.600 99.200 1253.100 99.200 H1258.500" fill="none" stroke="#1f1f1f" stroke-width="2.45" stroke-linecap="round" stroke-linejoin="round"/><rect x="1253.800" y="103.800" width="10.300" height="11.200" rx="4.200" fill="none" stroke="#1f1f1f" stroke-width="2.450"/><path d="M1259 104.200 V108.700 H1263.700" fill="none" stroke="#1f1f1f" stroke-width="2.1" stroke-linecap="round" stroke-linejoin="round"/></svg>
<span class="t" style="left:777.9px;top:23px;font-size:17px;color:#222;transform:scaleX(0.9297);transform-origin:0 0;">Bulk create</span>
<svg class="abs" style="left:894px;top:17px;" width="27" height="26" viewBox="1392 92 27 26"><g transform="translate(1394 94.3) scale(1.0044444444444445)"><rect x="1.500" y="1.500" width="7.300" height="7.300" rx="2.200" fill="none" stroke="#1f1f1f" stroke-width="2.4"/><rect x="13.700" y="13.700" width="7.300" height="7.300" rx="2.200" fill="none" stroke="#1f1f1f" stroke-width="2.4"/><path d="M13 2.200 C16.800 2.200 18.500 4.700 18.500 8.800 M15.200 6.400 L18.500 9.700 L21.800 6.400" fill="none" stroke="#1f1f1f" stroke-width="2.4" stroke-linecap="round" stroke-linejoin="round"/><path d="M9.700 20.800 C5.900 20.800 4.200 18.300 4.200 14.200 M0.900 16.600 L4.200 13.300 L7.500 16.600" fill="none" stroke="#1f1f1f" stroke-width="2.4" stroke-linecap="round" stroke-linejoin="round"/></g></svg>
<span class="t" style="left:928.4px;top:23px;font-size:17px;color:#222;transform:scaleX(0.9418);transform-origin:0 0;">Quick replace</span>
<svg class="abs" style="left:1064px;top:18px;" width="24" height="24" viewBox="1562 93 24 24"><path d="M1564.700 98.300 H1576 M1570.200 96 V98.300 M1567.300 99.300 C1568.600 103.400 1571.500 106.800 1575.600 108.800 M1573.600 99.300 C1572.600 103.300 1569.700 106.600 1565 108.500" fill="none" stroke="#1f1f1f" stroke-width="2.3" stroke-linecap="round" stroke-linejoin="round"/><path d="M1574.200 114.600 L1578.600 103.600 L1583.100 114.600 M1575.700 111 H1581.600" fill="none" stroke="#1f1f1f" stroke-width="2.4" stroke-linecap="round" stroke-linejoin="round"/></svg>
<span class="t" style="left:1097.7px;top:23px;font-size:17px;color:#222;transform:scaleX(0.9123);transform-origin:0 0;">Translate</span>
</div>

<!-- ================= CANVAS ================= -->
<div id="page"></div>
<div class="abs" style="left:498px;top:75px;width:14px;height:1125px;background:linear-gradient(90deg,rgba(0,0,0,.05),rgba(0,0,0,0))"></div>
<span class="t" style="left:772.8px;top:197px;font-size:16px;font-weight:700;color:#1c1c1c;transform:scaleX(0.9167);transform-origin:0 0;">Page 1 -</span>
<span class="t" style="left:833.1px;top:197px;font-size:16px;color:#8f8f8f;transform:scaleX(0.9529);transform-origin:0 0;">Project 1</span>
<div class="abs" style="left:881px;top:450.5px;width:655px;height:437px;overflow:hidden"><svg width="655" height="437" viewBox="0 0 655 437" preserveAspectRatio="none" style="display:block"><defs><linearGradient id="clg" x1="0" y1="0" x2="0" y2="1"><stop offset="0" stop-color="#4e59f8"/><stop offset=".5" stop-color="#4c5cf7"/><stop offset="1" stop-color="#4b63f7"/></linearGradient><filter id="clf" x="-5%" y="-5%" width="110%" height="110%"><feTurbulence type="fractalNoise" baseFrequency="0.07" numOctaves="3" seed="4" result="n"/><feDisplacementMap in="SourceGraphic" in2="n" scale="9" xChannelSelector="R" yChannelSelector="G" result="d"/><feGaussianBlur in="d" stdDeviation="1.300"/></filter><filter id="clb" x="-20%" y="-20%" width="140%" height="140%"><feGaussianBlur stdDeviation="14"/></filter><filter id="clb2" x="-20%" y="-20%" width="140%" height="140%"><feGaussianBlur stdDeviation="7"/></filter><filter id="clh" x="-20%" y="-20%" width="140%" height="140%"><feGaussianBlur stdDeviation="22"/></filter><clipPath id="clc"><path d="M88.0 239.0 C86.7 234.2 87.5 234.5 92.0 230.0 C96.5 225.5 97.5 225.2 105.0 222.0 C112.5 218.8 113.1 219.6 120.0 218.0 C126.9 216.4 128.6 219.5 131.0 216.0 C133.4 212.5 131.1 212.5 129.0 205.0 C126.9 197.5 122.8 200.0 123.0 188.0 C123.2 176.0 125.4 170.1 129.7 160.0 C134.0 149.9 131.5 154.2 139.0 150.0 C146.5 145.8 147.8 146.4 157.7 144.3 C167.6 142.2 165.7 141.7 176.3 142.0 C186.9 142.3 186.7 142.7 197.3 145.5 C207.9 148.3 206.7 152.5 216.0 152.5 C225.3 152.5 223.0 150.5 232.3 145.5 C241.6 140.5 244.8 141.3 251.0 133.8 C257.2 126.3 252.2 125.4 255.7 117.5 C259.2 109.6 258.9 111.3 264.0 104.0 C269.1 96.7 267.3 95.4 275.0 90.0 C282.7 84.6 282.3 84.9 293.0 83.6 C303.7 82.3 303.3 82.0 315.0 85.0 C326.7 88.0 325.3 89.4 337.0 95.0 C348.7 100.6 347.3 99.1 359.0 106.0 C370.7 112.9 371.7 113.0 381.0 121.0 C390.3 129.0 389.2 128.7 394.0 136.0 C398.8 143.3 393.7 145.3 399.0 148.5 C404.3 151.7 403.1 148.4 414.0 148.0 C424.9 147.6 427.2 144.3 440.0 147.0 C452.8 149.7 452.1 150.3 462.0 158.0 C471.9 165.7 469.8 169.3 477.0 176.0 C484.2 182.7 481.3 181.5 489.0 183.0 C496.7 184.5 495.6 178.0 506.0 181.5 C516.4 185.0 515.2 191.1 528.0 196.0 C540.8 200.9 542.8 193.6 554.0 200.0 C565.2 206.4 562.3 208.8 570.0 220.0 C577.7 231.2 578.7 233.2 583.0 242.0 C587.3 250.8 587.1 245.3 586.0 253.0 C584.9 260.7 584.2 261.1 579.0 271.0 C573.8 280.9 574.8 279.6 566.5 290.0 C558.2 300.4 556.4 306.8 548.0 310.0 C539.6 313.2 544.3 302.5 535.0 302.0 C525.7 301.5 528.5 304.5 513.0 308.0 C497.5 311.5 496.5 310.2 477.0 315.0 C457.5 319.8 460.0 320.9 440.0 326.0 C420.0 331.1 417.7 334.8 402.0 334.0 C386.3 333.2 394.3 327.8 381.0 323.0 C367.7 318.2 363.7 313.9 352.0 316.0 C340.3 318.1 345.8 329.1 337.0 331.0 C328.2 332.9 329.5 321.7 319.0 323.0 C308.5 324.3 312.7 335.2 297.7 336.0 C282.7 336.8 280.1 327.1 262.7 326.0 C245.3 324.9 249.7 329.3 232.3 332.0 C214.9 334.7 209.7 336.0 197.3 336.0 C184.9 336.0 195.0 336.1 185.7 332.0 C176.4 327.9 173.5 325.4 162.3 320.5 C151.1 315.6 151.2 319.1 143.7 313.5 C136.2 307.9 137.8 308.4 134.3 299.5 C130.8 290.6 131.7 288.7 130.5 280.0 C129.3 271.3 131.2 272.2 129.7 266.8 C128.2 261.4 130.0 263.5 125.0 259.8 C120.0 256.1 118.5 255.9 111.0 252.8 C103.5 249.7 103.1 251.7 97.0 248.0 C90.9 244.3 89.3 243.8 88.0 239.0Z"/></clipPath></defs><rect width="655" height="437" fill="url(#clg)"/><path d="M88.0 239.0 C86.7 234.2 87.5 234.5 92.0 230.0 C96.5 225.5 97.5 225.2 105.0 222.0 C112.5 218.8 113.1 219.6 120.0 218.0 C126.9 216.4 128.6 219.5 131.0 216.0 C133.4 212.5 131.1 212.5 129.0 205.0 C126.9 197.5 122.8 200.0 123.0 188.0 C123.2 176.0 125.4 170.1 129.7 160.0 C134.0 149.9 131.5 154.2 139.0 150.0 C146.5 145.8 147.8 146.4 157.7 144.3 C167.6 142.2 165.7 141.7 176.3 142.0 C186.9 142.3 186.7 142.7 197.3 145.5 C207.9 148.3 206.7 152.5 216.0 152.5 C225.3 152.5 223.0 150.5 232.3 145.5 C241.6 140.5 244.8 141.3 251.0 133.8 C257.2 126.3 252.2 125.4 255.7 117.5 C259.2 109.6 258.9 111.3 264.0 104.0 C269.1 96.7 267.3 95.4 275.0 90.0 C282.7 84.6 282.3 84.9 293.0 83.6 C303.7 82.3 303.3 82.0 315.0 85.0 C326.7 88.0 325.3 89.4 337.0 95.0 C348.7 100.6 347.3 99.1 359.0 106.0 C370.7 112.9 371.7 113.0 381.0 121.0 C390.3 129.0 389.2 128.7 394.0 136.0 C398.8 143.3 393.7 145.3 399.0 148.5 C404.3 151.7 403.1 148.4 414.0 148.0 C424.9 147.6 427.2 144.3 440.0 147.0 C452.8 149.7 452.1 150.3 462.0 158.0 C471.9 165.7 469.8 169.3 477.0 176.0 C484.2 182.7 481.3 181.5 489.0 183.0 C496.7 184.5 495.6 178.0 506.0 181.5 C516.4 185.0 515.2 191.1 528.0 196.0 C540.8 200.9 542.8 193.6 554.0 200.0 C565.2 206.4 562.3 208.8 570.0 220.0 C577.7 231.2 578.7 233.2 583.0 242.0 C587.3 250.8 587.1 245.3 586.0 253.0 C584.9 260.7 584.2 261.1 579.0 271.0 C573.8 280.9 574.8 279.6 566.5 290.0 C558.2 300.4 556.4 306.8 548.0 310.0 C539.6 313.2 544.3 302.5 535.0 302.0 C525.7 301.5 528.5 304.5 513.0 308.0 C497.5 311.5 496.5 310.2 477.0 315.0 C457.5 319.8 460.0 320.9 440.0 326.0 C420.0 331.1 417.7 334.8 402.0 334.0 C386.3 333.2 394.3 327.8 381.0 323.0 C367.7 318.2 363.7 313.9 352.0 316.0 C340.3 318.1 345.8 329.1 337.0 331.0 C328.2 332.9 329.5 321.7 319.0 323.0 C308.5 324.3 312.7 335.2 297.7 336.0 C282.7 336.8 280.1 327.1 262.7 326.0 C245.3 324.9 249.7 329.3 232.3 332.0 C214.9 334.7 209.7 336.0 197.3 336.0 C184.9 336.0 195.0 336.1 185.7 332.0 C176.4 327.9 173.5 325.4 162.3 320.5 C151.1 315.6 151.2 319.1 143.7 313.5 C136.2 307.9 137.8 308.4 134.3 299.5 C130.8 290.6 131.7 288.7 130.5 280.0 C129.3 271.3 131.2 272.2 129.7 266.8 C128.2 261.4 130.0 263.5 125.0 259.8 C120.0 256.1 118.5 255.9 111.0 252.8 C103.5 249.7 103.1 251.7 97.0 248.0 C90.9 244.3 89.3 243.8 88.0 239.0Z" fill="#7f9bff" opacity=".55" filter="url(#clh)"/><g filter="url(#clb2)" opacity=".5"><ellipse cx="118" cy="140" rx="16" ry="7" fill="#6f8cff"/><ellipse cx="112" cy="172" rx="10" ry="6" fill="#6f8cff"/><ellipse cx="540" cy="186" rx="8" ry="9" fill="#4fb4ff"/><ellipse cx="178" cy="130" rx="10" ry="5" fill="#6f8cff"/><ellipse cx="50" cy="266" rx="12" ry="9" fill="#6fa8ff"/><ellipse cx="100" cy="266" rx="9" ry="11" fill="#7fb0ff"/><ellipse cx="44" cy="262" rx="9" ry="6" fill="#8fb4ff"/></g><g filter="url(#clf)"><g fill="#fdfdff"><path d="M88.0 239.0 C86.7 234.2 87.5 234.5 92.0 230.0 C96.5 225.5 97.5 225.2 105.0 222.0 C112.5 218.8 113.1 219.6 120.0 218.0 C126.9 216.4 128.6 219.5 131.0 216.0 C133.4 212.5 131.1 212.5 129.0 205.0 C126.9 197.5 122.8 200.0 123.0 188.0 C123.2 176.0 125.4 170.1 129.7 160.0 C134.0 149.9 131.5 154.2 139.0 150.0 C146.5 145.8 147.8 146.4 157.7 144.3 C167.6 142.2 165.7 141.7 176.3 142.0 C186.9 142.3 186.7 142.7 197.3 145.5 C207.9 148.3 206.7 152.5 216.0 152.5 C225.3 152.5 223.0 150.5 232.3 145.5 C241.6 140.5 244.8 141.3 251.0 133.8 C257.2 126.3 252.2 125.4 255.7 117.5 C259.2 109.6 258.9 111.3 264.0 104.0 C269.1 96.7 267.3 95.4 275.0 90.0 C282.7 84.6 282.3 84.9 293.0 83.6 C303.7 82.3 303.3 82.0 315.0 85.0 C326.7 88.0 325.3 89.4 337.0 95.0 C348.7 100.6 347.3 99.1 359.0 106.0 C370.7 112.9 371.7 113.0 381.0 121.0 C390.3 129.0 389.2 128.7 394.0 136.0 C398.8 143.3 393.7 145.3 399.0 148.5 C404.3 151.7 403.1 148.4 414.0 148.0 C424.9 147.6 427.2 144.3 440.0 147.0 C452.8 149.7 452.1 150.3 462.0 158.0 C471.9 165.7 469.8 169.3 477.0 176.0 C484.2 182.7 481.3 181.5 489.0 183.0 C496.7 184.5 495.6 178.0 506.0 181.5 C516.4 185.0 515.2 191.1 528.0 196.0 C540.8 200.9 542.8 193.6 554.0 200.0 C565.2 206.4 562.3 208.8 570.0 220.0 C577.7 231.2 578.7 233.2 583.0 242.0 C587.3 250.8 587.1 245.3 586.0 253.0 C584.9 260.7 584.2 261.1 579.0 271.0 C573.8 280.9 574.8 279.6 566.5 290.0 C558.2 300.4 556.4 306.8 548.0 310.0 C539.6 313.2 544.3 302.5 535.0 302.0 C525.7 301.5 528.5 304.5 513.0 308.0 C497.5 311.5 496.5 310.2 477.0 315.0 C457.5 319.8 460.0 320.9 440.0 326.0 C420.0 331.1 417.7 334.8 402.0 334.0 C386.3 333.2 394.3 327.8 381.0 323.0 C367.7 318.2 363.7 313.9 352.0 316.0 C340.3 318.1 345.8 329.1 337.0 331.0 C328.2 332.9 329.5 321.7 319.0 323.0 C308.5 324.3 312.7 335.2 297.7 336.0 C282.7 336.8 280.1 327.1 262.7 326.0 C245.3 324.9 249.7 329.3 232.3 332.0 C214.9 334.7 209.7 336.0 197.3 336.0 C184.9 336.0 195.0 336.1 185.7 332.0 C176.4 327.9 173.5 325.4 162.3 320.5 C151.1 315.6 151.2 319.1 143.7 313.5 C136.2 307.9 137.8 308.4 134.3 299.5 C130.8 290.6 131.7 288.7 130.5 280.0 C129.3 271.3 131.2 272.2 129.7 266.8 C128.2 261.4 130.0 263.5 125.0 259.8 C120.0 256.1 118.5 255.9 111.0 252.8 C103.5 249.7 103.1 251.7 97.0 248.0 C90.9 244.3 89.3 243.8 88.0 239.0Z"/><circle cx="95.1" cy="237.1" r="7.9"/><circle cx="96.4" cy="237.7" r="9.9"/><circle cx="104.3" cy="226.8" r="9.2"/><circle cx="103.8" cy="225.7" r="6.3"/><circle cx="116.6" cy="220.3" r="6.2"/><circle cx="111.6" cy="221.6" r="6.4"/><circle cx="136.1" cy="216.5" r="8.5"/><circle cx="128.0" cy="217.7" r="6.7"/><circle cx="137.1" cy="205.8" r="9.8"/><circle cx="138.0" cy="211.9" r="9.5"/><circle cx="138.4" cy="205.1" r="11.9"/><circle cx="136.4" cy="200.9" r="11.2"/><circle cx="129.3" cy="185.7" r="6.9"/><circle cx="134.8" cy="166.3" r="7.9"/><circle cx="140.6" cy="156.1" r="7.1"/><circle cx="140.8" cy="158.9" r="9.8"/><circle cx="147.2" cy="152.6" r="9.3"/><circle cx="147.7" cy="150.9" r="6.4"/><circle cx="173.0" cy="147.1" r="10.1"/><circle cx="174.3" cy="145.9" r="7.9"/><circle cx="188.7" cy="146.7" r="8.7"/><circle cx="198.5" cy="149.0" r="10.8"/><circle cx="213.1" cy="153.0" r="7.5"/><circle cx="219.9" cy="155.9" r="9.2"/><circle cx="227.5" cy="155.6" r="10.4"/><circle cx="225.7" cy="157.5" r="11.9"/><circle cx="251.4" cy="141.6" r="8.5"/><circle cx="245.5" cy="143.8" r="6.9"/><circle cx="256.9" cy="127.2" r="6.2"/><circle cx="258.4" cy="131.7" r="10.6"/><circle cx="262.5" cy="121.5" r="11.3"/><circle cx="264.4" cy="116.9" r="10.2"/><circle cx="271.8" cy="104.9" r="9.5"/><circle cx="277.6" cy="99.2" r="11.0"/><circle cx="288.7" cy="92.8" r="8.8"/><circle cx="288.9" cy="90.6" r="6.4"/><circle cx="315.8" cy="93.0" r="9.9"/><circle cx="300.3" cy="92.9" r="10.9"/><circle cx="329.4" cy="98.5" r="8.3"/><circle cx="324.9" cy="94.6" r="6.1"/><circle cx="338.3" cy="101.9" r="7.0"/><circle cx="352.8" cy="108.5" r="6.4"/><circle cx="362.2" cy="114.8" r="6.8"/><circle cx="375.4" cy="125.3" r="8.3"/><circle cx="383.7" cy="132.1" r="6.5"/><circle cx="388.0" cy="140.4" r="9.3"/><circle cx="392.0" cy="153.1" r="10.9"/><circle cx="391.6" cy="145.7" r="7.7"/><circle cx="407.1" cy="152.3" r="8.2"/><circle cx="393.8" cy="154.5" r="11.7"/><circle cx="415.3" cy="151.1" r="7.1"/><circle cx="421.6" cy="151.0" r="7.4"/><circle cx="439.0" cy="153.8" r="9.5"/><circle cx="444.9" cy="154.1" r="6.0"/><circle cx="464.3" cy="170.8" r="8.2"/><circle cx="463.5" cy="174.1" r="11.7"/><circle cx="477.2" cy="182.3" r="9.1"/><circle cx="469.7" cy="178.5" r="10.1"/><circle cx="493.1" cy="183.8" r="11.4"/><circle cx="493.5" cy="183.7" r="11.2"/><circle cx="508.1" cy="188.7" r="8.4"/><circle cx="514.6" cy="191.8" r="6.6"/><circle cx="524.6" cy="196.9" r="6.4"/><circle cx="526.3" cy="197.3" r="7.3"/><circle cx="548.3" cy="201.6" r="8.0"/><circle cx="551.5" cy="203.5" r="6.0"/><circle cx="569.3" cy="228.0" r="6.6"/><circle cx="576.3" cy="239.3" r="6.2"/><circle cx="575.5" cy="243.1" r="9.7"/><circle cx="577.9" cy="245.4" r="7.5"/><circle cx="578.5" cy="254.5" r="8.2"/><circle cx="570.0" cy="269.9" r="11.1"/><circle cx="565.9" cy="278.9" r="8.8"/><circle cx="572.5" cy="272.0" r="6.5"/><circle cx="555.2" cy="293.6" r="8.1"/><circle cx="554.8" cy="290.9" r="11.0"/><circle cx="530.9" cy="300.7" r="6.1"/><circle cx="539.0" cy="306.2" r="9.2"/><circle cx="527.2" cy="299.6" r="9.3"/><circle cx="506.4" cy="305.4" r="9.2"/><circle cx="479.5" cy="309.3" r="11.2"/><circle cx="494.1" cy="308.2" r="7.6"/><circle cx="443.4" cy="320.7" r="7.0"/><circle cx="441.6" cy="319.9" r="9.2"/><circle cx="426.4" cy="323.7" r="8.0"/><circle cx="395.6" cy="328.3" r="10.9"/><circle cx="379.2" cy="318.1" r="11.1"/><circle cx="380.7" cy="319.0" r="10.9"/><circle cx="362.5" cy="314.5" r="7.4"/><circle cx="376.3" cy="317.4" r="8.1"/><circle cx="345.7" cy="315.6" r="6.2"/><circle cx="339.0" cy="320.8" r="7.6"/><circle cx="326.5" cy="318.1" r="11.7"/><circle cx="316.8" cy="313.9" r="11.6"/><circle cx="310.3" cy="318.2" r="11.7"/><circle cx="313.6" cy="320.0" r="7.3"/><circle cx="291.1" cy="328.1" r="7.2"/><circle cx="267.0" cy="319.0" r="9.7"/><circle cx="251.8" cy="320.6" r="11.0"/><circle cx="241.7" cy="323.4" r="9.9"/><circle cx="212.2" cy="330.3" r="6.5"/><circle cx="210.3" cy="327.4" r="11.5"/><circle cx="197.8" cy="327.9" r="10.5"/><circle cx="192.2" cy="328.7" r="7.1"/><circle cx="171.8" cy="318.4" r="8.0"/><circle cx="183.7" cy="321.0" r="11.8"/><circle cx="150.4" cy="310.0" r="8.4"/><circle cx="166.2" cy="314.6" r="10.3"/><circle cx="147.1" cy="308.7" r="6.8"/><circle cx="144.3" cy="297.7" r="11.4"/><circle cx="136.3" cy="281.1" r="6.9"/><circle cx="140.7" cy="282.7" r="11.9"/><circle cx="136.4" cy="270.7" r="8.1"/><circle cx="135.8" cy="278.1" r="6.8"/><circle cx="136.1" cy="259.9" r="11.8"/><circle cx="132.6" cy="258.4" r="9.2"/><circle cx="119.7" cy="252.3" r="8.6"/><circle cx="130.8" cy="256.5" r="11.0"/><circle cx="113.0" cy="250.4" r="7.5"/><circle cx="108.8" cy="249.0" r="7.4"/><circle cx="99.4" cy="243.5" r="7.6"/><circle cx="94.3" cy="239.1" r="6.8"/><path d="M57.0 268.0 C57.3 263.2 57.7 263.8 61.0 259.0 C64.3 254.2 62.9 255.3 68.0 252.0 C73.1 248.7 72.3 247.7 78.0 248.0 C83.7 248.3 82.5 248.5 87.0 253.0 C91.5 257.5 92.1 256.7 93.0 263.0 C93.9 269.3 92.1 268.0 90.0 274.0 C87.9 280.0 90.2 279.7 86.0 283.0 C81.8 286.3 82.0 285.6 76.0 285.0 C70.0 284.4 70.8 284.0 66.0 281.0 C61.2 278.0 62.7 278.9 60.0 275.0 C57.3 271.1 56.7 272.8 57.0 268.0Z" fill="#f3f0fb"/></g><g clip-path="url(#clc)"><g filter="url(#clb)"><ellipse cx="215" cy="318" rx="110" ry="38" fill="#8fa6f7" opacity=".85"/><ellipse cx="150" cy="300" rx="40" ry="30" fill="#6f9bf6" opacity=".75"/><ellipse cx="330" cy="300" rx="90" ry="26" fill="#cfcdea" opacity=".9"/><ellipse cx="430" cy="262" rx="80" ry="30" fill="#e6e0f3" opacity=".8"/><ellipse cx="500" cy="290" rx="60" ry="18" fill="#d9d6ee" opacity=".7"/><ellipse cx="300" cy="232" rx="60" ry="16" fill="#ece8f6" opacity=".7"/><ellipse cx="105" cy="240" rx="22" ry="10" fill="#efeaf8" opacity=".6"/></g><g filter="url(#clb2)"><ellipse cx="160" cy="318" rx="26" ry="12" fill="#39b0f2" opacity=".55"/><ellipse cx="345" cy="322" rx="14" ry="9" fill="#3a9cf2" opacity=".45"/><ellipse cx="215" cy="300" rx="60" ry="12" fill="#dfe3fa" opacity=".55"/></g></g></g></svg></div>
<div class="abs" style="left:880.500px;top:450px;width:656px;height:438px;border:1.500px solid #5055dd"></div>
<div class="abs" style="left:874.5px;top:444.0px;width:15px;height:15px;border-radius:50%;background:#fff;border:2.400px solid #5055dd"></div>
<div class="abs" style="left:874.5px;top:879.8px;width:15px;height:15px;border-radius:50%;background:#fff;border:2.400px solid #5055dd"></div>
<div class="abs" style="left:1528.5px;top:444.0px;width:15px;height:15px;border-radius:50%;background:#fff;border:2.400px solid #5055dd"></div>
<div class="abs" style="left:1528.5px;top:879.8px;width:15px;height:15px;border-radius:50%;background:#fff;border:2.400px solid #5055dd"></div>
<div class="abs" style="left:1196.4px;top:446.2px;width:25.600px;height:10px;border-radius:5px;background:#fff;border:2.400px solid #5055dd"></div>
<div class="abs" style="left:1196.4px;top:882.5px;width:25.600px;height:10px;border-radius:5px;background:#fff;border:2.400px solid #5055dd"></div>
<div class="abs" style="left:876.8px;top:656.2px;width:10px;height:25.600px;border-radius:5px;background:#fff;border:2.400px solid #5055dd"></div>
<div class="abs" style="left:1531px;top:656.2px;width:10px;height:25.600px;border-radius:5px;background:#fff;border:2.400px solid #5055dd"></div>
<div class="abs" style="left:1193.700px;top:905px;width:30px;height:30px;border-radius:50%;background:#5055dd"></div>
<svg class="abs" style="left:1198px;top:909px;" width="22" height="22" viewBox="1198 909 22 22"><path d="M1202.700 916.200 A7.500 7.500 0 1 1 1203.500 924.900" fill="none" stroke="#fff" stroke-width="2.5" stroke-linecap="round" stroke-linejoin="round"/><path d="M1200.300 913.200 V919.300 H1206.400" fill="none" stroke="#fff" stroke-width="2.500" stroke-linecap="round" stroke-linejoin="miter"/></svg>
<div class="abs" style="left:1808px;top:175px;width:82px;height:82px;border:3px solid #000;border-radius:9px;background:#fff"></div>
<div class="abs" style="left:1818.200px;top:195.500px;width:61.200px;height:40.600px;overflow:hidden"><svg width="61.2" height="40.6" viewBox="0 0 655 437" preserveAspectRatio="none" style="display:block"><defs><linearGradient id="csg" x1="0" y1="0" x2="0" y2="1"><stop offset="0" stop-color="#4e59f8"/><stop offset=".5" stop-color="#4c5cf7"/><stop offset="1" stop-color="#4b63f7"/></linearGradient><filter id="csf" x="-5%" y="-5%" width="110%" height="110%"><feTurbulence type="fractalNoise" baseFrequency="0.07" numOctaves="3" seed="4" result="n"/><feDisplacementMap in="SourceGraphic" in2="n" scale="9" xChannelSelector="R" yChannelSelector="G" result="d"/><feGaussianBlur in="d" stdDeviation="1.300"/></filter><filter id="csb" x="-20%" y="-20%" width="140%" height="140%"><feGaussianBlur stdDeviation="14"/></filter><filter id="csb2" x="-20%" y="-20%" width="140%" height="140%"><feGaussianBlur stdDeviation="7"/></filter><filter id="csh" x="-20%" y="-20%" width="140%" height="140%"><feGaussianBlur stdDeviation="22"/></filter><clipPath id="csc"><path d="M88.0 239.0 C86.7 234.2 87.5 234.5 92.0 230.0 C96.5 225.5 97.5 225.2 105.0 222.0 C112.5 218.8 113.1 219.6 120.0 218.0 C126.9 216.4 128.6 219.5 131.0 216.0 C133.4 212.5 131.1 212.5 129.0 205.0 C126.9 197.5 122.8 200.0 123.0 188.0 C123.2 176.0 125.4 170.1 129.7 160.0 C134.0 149.9 131.5 154.2 139.0 150.0 C146.5 145.8 147.8 146.4 157.7 144.3 C167.6 142.2 165.7 141.7 176.3 142.0 C186.9 142.3 186.7 142.7 197.3 145.5 C207.9 148.3 206.7 152.5 216.0 152.5 C225.3 152.5 223.0 150.5 232.3 145.5 C241.6 140.5 244.8 141.3 251.0 133.8 C257.2 126.3 252.2 125.4 255.7 117.5 C259.2 109.6 258.9 111.3 264.0 104.0 C269.1 96.7 267.3 95.4 275.0 90.0 C282.7 84.6 282.3 84.9 293.0 83.6 C303.7 82.3 303.3 82.0 315.0 85.0 C326.7 88.0 325.3 89.4 337.0 95.0 C348.7 100.6 347.3 99.1 359.0 106.0 C370.7 112.9 371.7 113.0 381.0 121.0 C390.3 129.0 389.2 128.7 394.0 136.0 C398.8 143.3 393.7 145.3 399.0 148.5 C404.3 151.7 403.1 148.4 414.0 148.0 C424.9 147.6 427.2 144.3 440.0 147.0 C452.8 149.7 452.1 150.3 462.0 158.0 C471.9 165.7 469.8 169.3 477.0 176.0 C484.2 182.7 481.3 181.5 489.0 183.0 C496.7 184.5 495.6 178.0 506.0 181.5 C516.4 185.0 515.2 191.1 528.0 196.0 C540.8 200.9 542.8 193.6 554.0 200.0 C565.2 206.4 562.3 208.8 570.0 220.0 C577.7 231.2 578.7 233.2 583.0 242.0 C587.3 250.8 587.1 245.3 586.0 253.0 C584.9 260.7 584.2 261.1 579.0 271.0 C573.8 280.9 574.8 279.6 566.5 290.0 C558.2 300.4 556.4 306.8 548.0 310.0 C539.6 313.2 544.3 302.5 535.0 302.0 C525.7 301.5 528.5 304.5 513.0 308.0 C497.5 311.5 496.5 310.2 477.0 315.0 C457.5 319.8 460.0 320.9 440.0 326.0 C420.0 331.1 417.7 334.8 402.0 334.0 C386.3 333.2 394.3 327.8 381.0 323.0 C367.7 318.2 363.7 313.9 352.0 316.0 C340.3 318.1 345.8 329.1 337.0 331.0 C328.2 332.9 329.5 321.7 319.0 323.0 C308.5 324.3 312.7 335.2 297.7 336.0 C282.7 336.8 280.1 327.1 262.7 326.0 C245.3 324.9 249.7 329.3 232.3 332.0 C214.9 334.7 209.7 336.0 197.3 336.0 C184.9 336.0 195.0 336.1 185.7 332.0 C176.4 327.9 173.5 325.4 162.3 320.5 C151.1 315.6 151.2 319.1 143.7 313.5 C136.2 307.9 137.8 308.4 134.3 299.5 C130.8 290.6 131.7 288.7 130.5 280.0 C129.3 271.3 131.2 272.2 129.7 266.8 C128.2 261.4 130.0 263.5 125.0 259.8 C120.0 256.1 118.5 255.9 111.0 252.8 C103.5 249.7 103.1 251.7 97.0 248.0 C90.9 244.3 89.3 243.8 88.0 239.0Z"/></clipPath></defs><rect width="655" height="437" fill="url(#csg)"/><path d="M88.0 239.0 C86.7 234.2 87.5 234.5 92.0 230.0 C96.5 225.5 97.5 225.2 105.0 222.0 C112.5 218.8 113.1 219.6 120.0 218.0 C126.9 216.4 128.6 219.5 131.0 216.0 C133.4 212.5 131.1 212.5 129.0 205.0 C126.9 197.5 122.8 200.0 123.0 188.0 C123.2 176.0 125.4 170.1 129.7 160.0 C134.0 149.9 131.5 154.2 139.0 150.0 C146.5 145.8 147.8 146.4 157.7 144.3 C167.6 142.2 165.7 141.7 176.3 142.0 C186.9 142.3 186.7 142.7 197.3 145.5 C207.9 148.3 206.7 152.5 216.0 152.5 C225.3 152.5 223.0 150.5 232.3 145.5 C241.6 140.5 244.8 141.3 251.0 133.8 C257.2 126.3 252.2 125.4 255.7 117.5 C259.2 109.6 258.9 111.3 264.0 104.0 C269.1 96.7 267.3 95.4 275.0 90.0 C282.7 84.6 282.3 84.9 293.0 83.6 C303.7 82.3 303.3 82.0 315.0 85.0 C326.7 88.0 325.3 89.4 337.0 95.0 C348.7 100.6 347.3 99.1 359.0 106.0 C370.7 112.9 371.7 113.0 381.0 121.0 C390.3 129.0 389.2 128.7 394.0 136.0 C398.8 143.3 393.7 145.3 399.0 148.5 C404.3 151.7 403.1 148.4 414.0 148.0 C424.9 147.6 427.2 144.3 440.0 147.0 C452.8 149.7 452.1 150.3 462.0 158.0 C471.9 165.7 469.8 169.3 477.0 176.0 C484.2 182.7 481.3 181.5 489.0 183.0 C496.7 184.5 495.6 178.0 506.0 181.5 C516.4 185.0 515.2 191.1 528.0 196.0 C540.8 200.9 542.8 193.6 554.0 200.0 C565.2 206.4 562.3 208.8 570.0 220.0 C577.7 231.2 578.7 233.2 583.0 242.0 C587.3 250.8 587.1 245.3 586.0 253.0 C584.9 260.7 584.2 261.1 579.0 271.0 C573.8 280.9 574.8 279.6 566.5 290.0 C558.2 300.4 556.4 306.8 548.0 310.0 C539.6 313.2 544.3 302.5 535.0 302.0 C525.7 301.5 528.5 304.5 513.0 308.0 C497.5 311.5 496.5 310.2 477.0 315.0 C457.5 319.8 460.0 320.9 440.0 326.0 C420.0 331.1 417.7 334.8 402.0 334.0 C386.3 333.2 394.3 327.8 381.0 323.0 C367.7 318.2 363.7 313.9 352.0 316.0 C340.3 318.1 345.8 329.1 337.0 331.0 C328.2 332.9 329.5 321.7 319.0 323.0 C308.5 324.3 312.7 335.2 297.7 336.0 C282.7 336.8 280.1 327.1 262.7 326.0 C245.3 324.9 249.7 329.3 232.3 332.0 C214.9 334.7 209.7 336.0 197.3 336.0 C184.9 336.0 195.0 336.1 185.7 332.0 C176.4 327.9 173.5 325.4 162.3 320.5 C151.1 315.6 151.2 319.1 143.7 313.5 C136.2 307.9 137.8 308.4 134.3 299.5 C130.8 290.6 131.7 288.7 130.5 280.0 C129.3 271.3 131.2 272.2 129.7 266.8 C128.2 261.4 130.0 263.5 125.0 259.8 C120.0 256.1 118.5 255.9 111.0 252.8 C103.5 249.7 103.1 251.7 97.0 248.0 C90.9 244.3 89.3 243.8 88.0 239.0Z" fill="#7f9bff" opacity=".55" filter="url(#csh)"/><g filter="url(#csb2)" opacity=".5"><ellipse cx="118" cy="140" rx="16" ry="7" fill="#6f8cff"/><ellipse cx="112" cy="172" rx="10" ry="6" fill="#6f8cff"/><ellipse cx="540" cy="186" rx="8" ry="9" fill="#4fb4ff"/><ellipse cx="178" cy="130" rx="10" ry="5" fill="#6f8cff"/><ellipse cx="50" cy="266" rx="12" ry="9" fill="#6fa8ff"/><ellipse cx="100" cy="266" rx="9" ry="11" fill="#7fb0ff"/><ellipse cx="44" cy="262" rx="9" ry="6" fill="#8fb4ff"/></g><g filter="url(#csf)"><g fill="#fdfdff"><path d="M88.0 239.0 C86.7 234.2 87.5 234.5 92.0 230.0 C96.5 225.5 97.5 225.2 105.0 222.0 C112.5 218.8 113.1 219.6 120.0 218.0 C126.9 216.4 128.6 219.5 131.0 216.0 C133.4 212.5 131.1 212.5 129.0 205.0 C126.9 197.5 122.8 200.0 123.0 188.0 C123.2 176.0 125.4 170.1 129.7 160.0 C134.0 149.9 131.5 154.2 139.0 150.0 C146.5 145.8 147.8 146.4 157.7 144.3 C167.6 142.2 165.7 141.7 176.3 142.0 C186.9 142.3 186.7 142.7 197.3 145.5 C207.9 148.3 206.7 152.5 216.0 152.5 C225.3 152.5 223.0 150.5 232.3 145.5 C241.6 140.5 244.8 141.3 251.0 133.8 C257.2 126.3 252.2 125.4 255.7 117.5 C259.2 109.6 258.9 111.3 264.0 104.0 C269.1 96.7 267.3 95.4 275.0 90.0 C282.7 84.6 282.3 84.9 293.0 83.6 C303.7 82.3 303.3 82.0 315.0 85.0 C326.7 88.0 325.3 89.4 337.0 95.0 C348.7 100.6 347.3 99.1 359.0 106.0 C370.7 112.9 371.7 113.0 381.0 121.0 C390.3 129.0 389.2 128.7 394.0 136.0 C398.8 143.3 393.7 145.3 399.0 148.5 C404.3 151.7 403.1 148.4 414.0 148.0 C424.9 147.6 427.2 144.3 440.0 147.0 C452.8 149.7 452.1 150.3 462.0 158.0 C471.9 165.7 469.8 169.3 477.0 176.0 C484.2 182.7 481.3 181.5 489.0 183.0 C496.7 184.5 495.6 178.0 506.0 181.5 C516.4 185.0 515.2 191.1 528.0 196.0 C540.8 200.9 542.8 193.6 554.0 200.0 C565.2 206.4 562.3 208.8 570.0 220.0 C577.7 231.2 578.7 233.2 583.0 242.0 C587.3 250.8 587.1 245.3 586.0 253.0 C584.9 260.7 584.2 261.1 579.0 271.0 C573.8 280.9 574.8 279.6 566.5 290.0 C558.2 300.4 556.4 306.8 548.0 310.0 C539.6 313.2 544.3 302.5 535.0 302.0 C525.7 301.5 528.5 304.5 513.0 308.0 C497.5 311.5 496.5 310.2 477.0 315.0 C457.5 319.8 460.0 320.9 440.0 326.0 C420.0 331.1 417.7 334.8 402.0 334.0 C386.3 333.2 394.3 327.8 381.0 323.0 C367.7 318.2 363.7 313.9 352.0 316.0 C340.3 318.1 345.8 329.1 337.0 331.0 C328.2 332.9 329.5 321.7 319.0 323.0 C308.5 324.3 312.7 335.2 297.7 336.0 C282.7 336.8 280.1 327.1 262.7 326.0 C245.3 324.9 249.7 329.3 232.3 332.0 C214.9 334.7 209.7 336.0 197.3 336.0 C184.9 336.0 195.0 336.1 185.7 332.0 C176.4 327.9 173.5 325.4 162.3 320.5 C151.1 315.6 151.2 319.1 143.7 313.5 C136.2 307.9 137.8 308.4 134.3 299.5 C130.8 290.6 131.7 288.7 130.5 280.0 C129.3 271.3 131.2 272.2 129.7 266.8 C128.2 261.4 130.0 263.5 125.0 259.8 C120.0 256.1 118.5 255.9 111.0 252.8 C103.5 249.7 103.1 251.7 97.0 248.0 C90.9 244.3 89.3 243.8 88.0 239.0Z"/><circle cx="95.1" cy="237.1" r="7.9"/><circle cx="96.4" cy="237.7" r="9.9"/><circle cx="104.3" cy="226.8" r="9.2"/><circle cx="103.8" cy="225.7" r="6.3"/><circle cx="116.6" cy="220.3" r="6.2"/><circle cx="111.6" cy="221.6" r="6.4"/><circle cx="136.1" cy="216.5" r="8.5"/><circle cx="128.0" cy="217.7" r="6.7"/><circle cx="137.1" cy="205.8" r="9.8"/><circle cx="138.0" cy="211.9" r="9.5"/><circle cx="138.4" cy="205.1" r="11.9"/><circle cx="136.4" cy="200.9" r="11.2"/><circle cx="129.3" cy="185.7" r="6.9"/><circle cx="134.8" cy="166.3" r="7.9"/><circle cx="140.6" cy="156.1" r="7.1"/><circle cx="140.8" cy="158.9" r="9.8"/><circle cx="147.2" cy="152.6" r="9.3"/><circle cx="147.7" cy="150.9" r="6.4"/><circle cx="173.0" cy="147.1" r="10.1"/><circle cx="174.3" cy="145.9" r="7.9"/><circle cx="188.7" cy="146.7" r="8.7"/><circle cx="198.5" cy="149.0" r="10.8"/><circle cx="213.1" cy="153.0" r="7.5"/><circle cx="219.9" cy="155.9" r="9.2"/><circle cx="227.5" cy="155.6" r="10.4"/><circle cx="225.7" cy="157.5" r="11.9"/><circle cx="251.4" cy="141.6" r="8.5"/><circle cx="245.5" cy="143.8" r="6.9"/><circle cx="256.9" cy="127.2" r="6.2"/><circle cx="258.4" cy="131.7" r="10.6"/><circle cx="262.5" cy="121.5" r="11.3"/><circle cx="264.4" cy="116.9" r="10.2"/><circle cx="271.8" cy="104.9" r="9.5"/><circle cx="277.6" cy="99.2" r="11.0"/><circle cx="288.7" cy="92.8" r="8.8"/><circle cx="288.9" cy="90.6" r="6.4"/><circle cx="315.8" cy="93.0" r="9.9"/><circle cx="300.3" cy="92.9" r="10.9"/><circle cx="329.4" cy="98.5" r="8.3"/><circle cx="324.9" cy="94.6" r="6.1"/><circle cx="338.3" cy="101.9" r="7.0"/><circle cx="352.8" cy="108.5" r="6.4"/><circle cx="362.2" cy="114.8" r="6.8"/><circle cx="375.4" cy="125.3" r="8.3"/><circle cx="383.7" cy="132.1" r="6.5"/><circle cx="388.0" cy="140.4" r="9.3"/><circle cx="392.0" cy="153.1" r="10.9"/><circle cx="391.6" cy="145.7" r="7.7"/><circle cx="407.1" cy="152.3" r="8.2"/><circle cx="393.8" cy="154.5" r="11.7"/><circle cx="415.3" cy="151.1" r="7.1"/><circle cx="421.6" cy="151.0" r="7.4"/><circle cx="439.0" cy="153.8" r="9.5"/><circle cx="444.9" cy="154.1" r="6.0"/><circle cx="464.3" cy="170.8" r="8.2"/><circle cx="463.5" cy="174.1" r="11.7"/><circle cx="477.2" cy="182.3" r="9.1"/><circle cx="469.7" cy="178.5" r="10.1"/><circle cx="493.1" cy="183.8" r="11.4"/><circle cx="493.5" cy="183.7" r="11.2"/><circle cx="508.1" cy="188.7" r="8.4"/><circle cx="514.6" cy="191.8" r="6.6"/><circle cx="524.6" cy="196.9" r="6.4"/><circle cx="526.3" cy="197.3" r="7.3"/><circle cx="548.3" cy="201.6" r="8.0"/><circle cx="551.5" cy="203.5" r="6.0"/><circle cx="569.3" cy="228.0" r="6.6"/><circle cx="576.3" cy="239.3" r="6.2"/><circle cx="575.5" cy="243.1" r="9.7"/><circle cx="577.9" cy="245.4" r="7.5"/><circle cx="578.5" cy="254.5" r="8.2"/><circle cx="570.0" cy="269.9" r="11.1"/><circle cx="565.9" cy="278.9" r="8.8"/><circle cx="572.5" cy="272.0" r="6.5"/><circle cx="555.2" cy="293.6" r="8.1"/><circle cx="554.8" cy="290.9" r="11.0"/><circle cx="530.9" cy="300.7" r="6.1"/><circle cx="539.0" cy="306.2" r="9.2"/><circle cx="527.2" cy="299.6" r="9.3"/><circle cx="506.4" cy="305.4" r="9.2"/><circle cx="479.5" cy="309.3" r="11.2"/><circle cx="494.1" cy="308.2" r="7.6"/><circle cx="443.4" cy="320.7" r="7.0"/><circle cx="441.6" cy="319.9" r="9.2"/><circle cx="426.4" cy="323.7" r="8.0"/><circle cx="395.6" cy="328.3" r="10.9"/><circle cx="379.2" cy="318.1" r="11.1"/><circle cx="380.7" cy="319.0" r="10.9"/><circle cx="362.5" cy="314.5" r="7.4"/><circle cx="376.3" cy="317.4" r="8.1"/><circle cx="345.7" cy="315.6" r="6.2"/><circle cx="339.0" cy="320.8" r="7.6"/><circle cx="326.5" cy="318.1" r="11.7"/><circle cx="316.8" cy="313.9" r="11.6"/><circle cx="310.3" cy="318.2" r="11.7"/><circle cx="313.6" cy="320.0" r="7.3"/><circle cx="291.1" cy="328.1" r="7.2"/><circle cx="267.0" cy="319.0" r="9.7"/><circle cx="251.8" cy="320.6" r="11.0"/><circle cx="241.7" cy="323.4" r="9.9"/><circle cx="212.2" cy="330.3" r="6.5"/><circle cx="210.3" cy="327.4" r="11.5"/><circle cx="197.8" cy="327.9" r="10.5"/><circle cx="192.2" cy="328.7" r="7.1"/><circle cx="171.8" cy="318.4" r="8.0"/><circle cx="183.7" cy="321.0" r="11.8"/><circle cx="150.4" cy="310.0" r="8.4"/><circle cx="166.2" cy="314.6" r="10.3"/><circle cx="147.1" cy="308.7" r="6.8"/><circle cx="144.3" cy="297.7" r="11.4"/><circle cx="136.3" cy="281.1" r="6.9"/><circle cx="140.7" cy="282.7" r="11.9"/><circle cx="136.4" cy="270.7" r="8.1"/><circle cx="135.8" cy="278.1" r="6.8"/><circle cx="136.1" cy="259.9" r="11.8"/><circle cx="132.6" cy="258.4" r="9.2"/><circle cx="119.7" cy="252.3" r="8.6"/><circle cx="130.8" cy="256.5" r="11.0"/><circle cx="113.0" cy="250.4" r="7.5"/><circle cx="108.8" cy="249.0" r="7.4"/><circle cx="99.4" cy="243.5" r="7.6"/><circle cx="94.3" cy="239.1" r="6.8"/><path d="M57.0 268.0 C57.3 263.2 57.7 263.8 61.0 259.0 C64.3 254.2 62.9 255.3 68.0 252.0 C73.1 248.7 72.3 247.7 78.0 248.0 C83.7 248.3 82.5 248.5 87.0 253.0 C91.5 257.5 92.1 256.7 93.0 263.0 C93.9 269.3 92.1 268.0 90.0 274.0 C87.9 280.0 90.2 279.7 86.0 283.0 C81.8 286.3 82.0 285.6 76.0 285.0 C70.0 284.4 70.8 284.0 66.0 281.0 C61.2 278.0 62.7 278.9 60.0 275.0 C57.3 271.1 56.7 272.8 57.0 268.0Z" fill="#f3f0fb"/></g><g clip-path="url(#csc)"><g filter="url(#csb)"><ellipse cx="215" cy="318" rx="110" ry="38" fill="#8fa6f7" opacity=".85"/><ellipse cx="150" cy="300" rx="40" ry="30" fill="#6f9bf6" opacity=".75"/><ellipse cx="330" cy="300" rx="90" ry="26" fill="#cfcdea" opacity=".9"/><ellipse cx="430" cy="262" rx="80" ry="30" fill="#e6e0f3" opacity=".8"/><ellipse cx="500" cy="290" rx="60" ry="18" fill="#d9d6ee" opacity=".7"/><ellipse cx="300" cy="232" rx="60" ry="16" fill="#ece8f6" opacity=".7"/><ellipse cx="105" cy="240" rx="22" ry="10" fill="#efeaf8" opacity=".6"/></g><g filter="url(#csb2)"><ellipse cx="160" cy="318" rx="26" ry="12" fill="#39b0f2" opacity=".55"/><ellipse cx="345" cy="322" rx="14" ry="9" fill="#3a9cf2" opacity=".45"/><ellipse cx="215" cy="300" rx="60" ry="12" fill="#dfe3fa" opacity=".55"/></g></g></g></svg></div>
<div class="pill" style="left:1828.500px;top:276.800px;width:40.500px;height:40.500px;border-radius:50%"></div>
<svg class="abs" style="left:1838px;top:286px;" width="22" height="22" viewBox="1838 286 22 22"><path d="M1842.900 291.200 L1854.600 302.900 M1854.600 291.200 L1842.900 302.900" fill="none" stroke="#1f1f1f" stroke-width="2.3" stroke-linecap="round" stroke-linejoin="round"/></svg>
<div class="pill" style="left:528px;top:1138.800px;width:41px;height:41px;border-radius:50%"></div>
<svg class="abs" style="left:538px;top:1148px;" width="22" height="22" viewBox="538 1148 22 22"><path d="M542.600 1152.600 C542.600 1151.300 543.700 1150.800 544.700 1151.300 L556 1157.600 C557 1158.200 557 1159.800 556 1160.400 L544.700 1166.700 C543.700 1167.200 542.600 1166.700 542.600 1165.400 Z" fill="#1f1f1f" stroke="#1f1f1f" stroke-width="2.200" stroke-linejoin="round"/></svg>
<div class="pill" style="left:579px;top:1139px;width:139px;height:40.500px"></div>
<span class="t" style="left:599.2px;top:1151px;font-size:17px;font-weight:700;color:#1c1c1c;transform:scaleX(0.9347);transform-origin:0 0;">Edit Timeline</span>
<div class="pill" style="left:1727.800px;top:1134px;width:40.500px;height:40.500px;border-radius:50%"></div>
<svg class="abs" style="left:1736px;top:1148px;" width="24" height="12" viewBox="1736 1148 24 12"><circle cx="1741.200" cy="1154.300" r="2.100" fill="#1f1f1f"/><circle cx="1748" cy="1154.300" r="2.100" fill="#1f1f1f"/><circle cx="1754.800" cy="1154.300" r="2.100" fill="#1f1f1f"/></svg>
<div class="pill" style="left:1778.800px;top:1134px;width:111px;height:40.500px"></div>
<span class="t" style="left:1798.9px;top:1146px;font-size:17px;font-weight:700;color:#1c1c1c;transform:scaleX(0.9091);transform-origin:0 0;">Add page</span>

<!-- ================= FLOATING BAR ================= -->
<div id="fbar">
<svg class="abs" style="left:12px;top:9px;" width="24" height="24" viewBox="927 400 24 24"><defs><clipPath id="oc929_402"><rect x="929.8" y="402.6" width="18.4" height="18.4" rx="4.97"/></clipPath></defs><g clip-path="url(#oc929_402)"><rect x="929.75" y="402.55" width="3.78" height="3.78" fill="#1f1f1f"/><rect x="929.75" y="409.91" width="3.78" height="3.78" fill="#1f1f1f"/><rect x="929.75" y="417.27" width="3.78" height="3.78" fill="#1f1f1f"/><rect x="933.43" y="406.23" width="3.78" height="3.78" fill="#1f1f1f"/><rect x="933.43" y="413.59" width="3.78" height="3.78" fill="#1f1f1f"/><rect x="937.11" y="402.55" width="3.78" height="3.78" fill="#1f1f1f"/><rect x="937.11" y="409.91" width="3.78" height="3.78" fill="#1f1f1f"/><rect x="937.11" y="417.27" width="3.78" height="3.78" fill="#1f1f1f"/><rect x="940.79" y="406.23" width="3.78" height="3.78" fill="#1f1f1f"/><rect x="940.79" y="413.59" width="3.78" height="3.78" fill="#1f1f1f"/><rect x="944.47" y="402.55" width="3.78" height="3.78" fill="#1f1f1f"/><rect x="944.47" y="409.91" width="3.78" height="3.78" fill="#1f1f1f"/><rect x="944.47" y="417.27" width="3.78" height="3.78" fill="#1f1f1f"/></g><rect x="930.8" y="403.6" width="16.4" height="16.4" rx="4.17" fill="none" stroke="#1f1f1f" stroke-width="2.100"/></svg>
<span class="t" style="left:42.8px;top:13px;font-size:15px;color:#222;transform:scaleX(0.9400);transform-origin:0 0;">Opacity</span>
<svg class="abs" style="left:115px;top:11px;" width="22" height="20" viewBox="1030 402 22 20"><path d="M1033.200 407.500 H1035.500 M1041.400 407.500 H1048.800 M1033.200 415.700 H1041.400 M1047.400 415.700 H1048.800" fill="none" stroke="#1f1f1f" stroke-width="2.1" stroke-linecap="round" stroke-linejoin="round"/><circle cx="1038.400" cy="407.500" r="2.500" fill="none" stroke="#1f1f1f" stroke-width="1.750"/><circle cx="1044.400" cy="415.700" r="2.500" fill="none" stroke="#1f1f1f" stroke-width="1.750"/></svg>
<span class="t" style="left:145.0px;top:13px;font-size:15px;color:#222;transform:scaleX(0.9425);transform-origin:0 0;">Apply adjustments</span>
<svg class="abs" style="left:287px;top:8px;" width="20" height="24" viewBox="1202 399 20 24"><path d="M1212.500 402.800 C1210.300 402 1208.700 402.800 1208.200 405 L1205.600 419.700 M1204.700 407.800 H1210.400" fill="none" stroke="#1f1f1f" stroke-width="2.25" stroke-linecap="round" stroke-linejoin="round"/><path d="M1212.300 407.900 L1217.200 417.200 M1218.700 407.700 L1209.800 417.400" fill="none" stroke="#1f1f1f" stroke-width="2.25" stroke-linecap="round" stroke-linejoin="round"/></svg>
<span class="t" style="left:315.0px;top:13px;font-size:15px;color:#222;transform:scaleX(0.9360);transform-origin:0 0;">Apply effects</span>
<svg class="abs" style="left:414px;top:8px;" width="25" height="25" viewBox="1329 399 25 25"><g transform="translate(1331.5 401.7) scale(0.8755555555555555)"><rect x="1.500" y="1.500" width="7.300" height="7.300" rx="2.200" fill="none" stroke="#1f1f1f" stroke-width="2.4"/><rect x="13.700" y="13.700" width="7.300" height="7.300" rx="2.200" fill="none" stroke="#1f1f1f" stroke-width="2.4"/><path d="M13 2.200 C16.800 2.200 18.500 4.700 18.500 8.800 M15.200 6.400 L18.500 9.700 L21.800 6.400" fill="none" stroke="#1f1f1f" stroke-width="2.4" stroke-linecap="round" stroke-linejoin="round"/><path d="M9.700 20.800 C5.900 20.800 4.200 18.300 4.200 14.200 M0.900 16.600 L4.200 13.300 L7.500 16.600" fill="none" stroke="#1f1f1f" stroke-width="2.4" stroke-linecap="round" stroke-linejoin="round"/></g></svg>
<svg class="abs" style="left:450px;top:8px;" width="25" height="25" viewBox="1365 399 25 25"><path d="M1372.500 402.200 V416 H1386.300 M1368 405.900 H1382.200 V420.300" fill="none" stroke="#1f1f1f" stroke-width="2.25" stroke-linecap="round" stroke-linejoin="round"/></svg>
<svg class="abs" style="left:485px;top:9px;" width="26" height="24" viewBox="1400 400 26 24"><rect x="1402.600" y="402.800" width="20.100" height="17.600" rx="5" fill="#1f1f1f"/><path d="M1405.200 405.300 H1420.100 V408.700 L1417.300 407 L1413.700 410.300 L1409.300 407.300 L1405.200 411.300 Z" fill="#fff"/><circle cx="1416.400" cy="407" r="1.200" fill="#1f1f1f"/></svg>
<svg class="abs" style="left:521px;top:8px;" width="25" height="25" viewBox="1436 399 25 25"><path d="M1439.200 406.700 H1457.200 M1444.600 406.300 C1444.600 403.600 1445.900 402.500 1448.200 402.500 C1450.500 402.500 1451.800 403.600 1451.800 406.300 M1441.200 407 L1441.700 417.200 C1441.800 419.200 1442.800 420.200 1444.800 420.200 H1451.600 C1453.600 420.200 1454.600 419.200 1454.700 417.200 L1455.200 407" fill="none" stroke="#1f1f1f" stroke-width="2.2" stroke-linecap="round" stroke-linejoin="round"/><path d="M1446 410.900 V416.300 M1450.500 410.900 V416.300" fill="none" stroke="#1f1f1f" stroke-width="2.1" stroke-linecap="round" stroke-linejoin="round"/></svg>
<svg class="abs" style="left:557px;top:15px;" width="24" height="12" viewBox="1472 406 24 12"><circle cx="1476.400" cy="411.500" r="1.750" fill="#1f1f1f"/><circle cx="1483.800" cy="411.500" r="1.750" fill="#1f1f1f"/><circle cx="1491" cy="411.500" r="1.750" fill="#1f1f1f"/></svg>
</div>

<!-- ================= CONTEXT MENU ================= -->
<div id="menu">
<svg class="abs" style="left:13px;top:13px;" width="28" height="22" viewBox="1481 455 28 22"><path d="M1495.200 467 H1488.200 C1486 467 1484.700 468 1484.700 469.500 C1484.700 471 1486 472 1488.200 472 H1495.200" fill="none" stroke="#c6c6c6" stroke-width="1.9" stroke-linecap="round" stroke-linejoin="round" /><circle cx="1502" cy="469.300" r="2.850" fill="none" stroke="#222" stroke-width="2.200"/><path d="M1492.900 461.600 C1495.200 459.300 1498.300 458.900 1500.800 460.400 M1498.600 457.300 L1501.400 460.400 L1498.300 462.600" fill="none" stroke="#222" stroke-width="1.9" stroke-linecap="round" stroke-linejoin="round" /></svg>
<span class="t" style="left:47.9px;top:16px;font-size:17px;color:#222;transform:scaleX(0.9648);transform-origin:0 0;">Compact menu</span>
<div class="mdiv" style="left:15.400000000000091px;top:50.7px;width:267.400px;height:1.300px"></div>
<svg class="abs" style="left:13px;top:63px;" width="28" height="27" viewBox="1481 505 28 27"><path d="M1485 514.800 V511.900 C1485 509.400 1486.400 508 1488.900 508 H1493.900 C1496.300 508 1497.800 509.300 1497.900 511.600" fill="none" stroke="#222" stroke-width="2.3" stroke-linecap="round" stroke-linejoin="round" /><path d="M1491.200 512.800 H1500.400 C1502.900 512.800 1504.300 514.200 1504.300 516.700 V524.500 C1504.300 527 1502.900 528.400 1500.400 528.400 H1496.700" fill="none" stroke="#222" stroke-width="2.3" stroke-linecap="round" stroke-linejoin="round" /><path d="M1485 518.500 C1485 522.600 1487.600 524.900 1492.600 524.800 M1489.900 521.300 L1493.400 524.800 L1489.900 528.300" fill="none" stroke="#222" stroke-width="2.3" stroke-linecap="round" stroke-linejoin="round" /></svg>
<span class="t" style="left:47.9px;top:68px;font-size:17px;color:#222;transform:scaleX(0.9321);transform-origin:0 0;">Copy</span>
<span class="t" style="left:271.1px;top:68px;font-size:17px;color:#333;transform:scaleX(0.9718);transform-origin:0 0;">C</span><svg class="abs" style="left:232px;top:66px;" width="56" height="22" viewBox="1700 508 56 22"><path d="M1728.63 514.18 A1.55 1.55 0 1 0 1727.08 515.73 H1735.18 A1.55 1.55 0 1 0 1733.63 514.18 V522.27 A1.55 1.55 0 1 0 1735.18 520.73 H1727.08 A1.55 1.55 0 1 0 1728.63 522.27 Z" fill="none" stroke="#333" stroke-width="1.45" stroke-linejoin="round"/></svg>
<svg class="abs" style="left:13px;top:103px;" width="28" height="27" viewBox="1481 545 28 27"><rect x="1485.900" y="553.300" width="17.900" height="15.700" rx="4.800" fill="none" stroke="#222" stroke-width="2.300"/><path d="M1490.900 555.300 V551.800 C1490.900 549.800 1492.600 548.900 1494.850 548.900 C1497.100 548.900 1498.800 549.800 1498.800 551.800 V555.300 M1490.900 555.300 H1498.800" fill="none" stroke="#222" stroke-width="2" stroke-linecap="round" stroke-linejoin="round" /></svg>
<span class="t" style="left:47.9px;top:109px;font-size:17px;color:#222;transform:scaleX(0.8910);transform-origin:0 0;">Paste</span>
<span class="t" style="left:272.0px;top:109px;font-size:17px;color:#333;transform:scaleX(0.9759);transform-origin:0 0;">V</span><svg class="abs" style="left:232px;top:106px;" width="56" height="22" viewBox="1700 548 56 22"><path d="M1729.49 554.83 A1.55 1.55 0 1 0 1727.94 556.38 H1736.04 A1.55 1.55 0 1 0 1734.49 554.83 V562.93 A1.55 1.55 0 1 0 1736.04 561.38 H1727.94 A1.55 1.55 0 1 0 1729.49 562.93 Z" fill="none" stroke="#333" stroke-width="1.45" stroke-linejoin="round"/></svg>
<svg class="abs" style="left:13px;top:144px;" width="28" height="27" viewBox="1481 586 28 27"><path d="M1490.500 604 H1488.700 C1486.200 604 1484.800 602.600 1484.800 600.100 V593.600 C1484.800 591.100 1486.200 589.700 1488.700 589.700 H1495.200 C1497.700 589.700 1499.100 591.100 1499.100 593.600" fill="none" stroke="#222" stroke-width="2.3" stroke-linecap="round" stroke-linejoin="round" /><rect x="1490.300" y="595" width="14.300" height="14.300" rx="4.300" fill="#fff" stroke="#222" stroke-width="2.300"/><path d="M1497.450 598.700 V605.600 M1494 602.150 H1500.900" fill="none" stroke="#222" stroke-width="2" stroke-linecap="round" stroke-linejoin="round" /></svg>
<span class="t" style="left:47.9px;top:149px;font-size:17px;color:#222;transform:scaleX(0.9649);transform-origin:0 0;">Duplicate</span>
<span class="t" style="left:271.1px;top:149px;font-size:17px;color:#333;transform:scaleX(0.9718);transform-origin:0 0;">D</span><svg class="abs" style="left:232px;top:147px;" width="56" height="22" viewBox="1700 589 56 22"><path d="M1728.63 595.13 A1.55 1.55 0 1 0 1727.08 596.68 H1735.18 A1.55 1.55 0 1 0 1733.63 595.13 V603.23 A1.55 1.55 0 1 0 1735.18 601.68 H1727.08 A1.55 1.55 0 1 0 1728.63 603.23 Z" fill="none" stroke="#333" stroke-width="1.45" stroke-linejoin="round"/></svg>
<div class="mdiv" style="left:15.400000000000091px;top:184.4px;width:267.400px;height:1.300px"></div>
<svg class="abs" style="left:13px;top:196px;" width="28" height="24" viewBox="1481 638 28 24"><path d="M1487 651.3 V640.8 M1483.9 644.0 L1487 640.8 L1490.1 644.0" fill="none" stroke="#b0b0b0" stroke-width="2.1" stroke-linecap="round" stroke-linejoin="round" /><path d="M1493.40 646.56 L1496.80 644.14 Q1498.4 642.80 1500.00 644.14 L1503.40 646.56 Q1505.30 647.7 1503.40 648.84 L1500.00 651.26 Q1498.4 652.60 1496.80 651.26 L1493.40 648.84 Q1491.50 647.7 1493.40 646.56 Z" fill="#e4e4e4" stroke="#b0b0b0" stroke-width="2.1" stroke-linejoin="round"/><path d="M1492.400 653.400 C1493.400 658 1496 659.600 1498.400 659.600 C1500.800 659.600 1503.400 658 1504.400 653.400" fill="none" stroke="#b0b0b0" stroke-width="2" stroke-linecap="round" stroke-linejoin="round" stroke-dasharray="0.1 3"/></svg>
<span class="t" style="left:47.9px;top:202px;font-size:17px;color:#b0b0b0;transform:scaleX(0.9802);transform-origin:0 0;">Bring to front</span>
<span class="t" style="left:278.1px;top:202px;font-size:17px;color:#b0b0b0;transform:scaleX(1.0389);transform-origin:0 0;">]</span><svg class="abs" style="left:232px;top:199px;" width="56" height="22" viewBox="1700 641 56 22"><path d="M1716.96 646.40 H1720.46 L1725.36 657.15 H1729.36 M1724.76 646.40 H1729.36" fill="none" stroke="#b0b0b0" stroke-width="1.45" stroke-linecap="round" stroke-linejoin="round" /><path d="M1735.58 647.63 A1.55 1.55 0 1 0 1734.03 649.18 H1742.13 A1.55 1.55 0 1 0 1740.58 647.63 V655.73 A1.55 1.55 0 1 0 1742.13 654.18 H1734.03 A1.55 1.55 0 1 0 1735.58 655.73 Z" fill="none" stroke="#b0b0b0" stroke-width="1.45" stroke-linejoin="round"/></svg>
<svg class="abs" style="left:13px;top:237px;" width="28" height="26" viewBox="1481 679 28 26"><path d="M1487 700.2 V689.8 M1483.9 693.0 L1487 689.8 L1490.1 693.0" fill="none" stroke="#b0b0b0" stroke-width="2.1" stroke-linecap="round" stroke-linejoin="round" /><path d="M1493.40 694.06 L1496.80 691.64 Q1498.4 690.30 1500.00 691.64 L1503.40 694.06 Q1505.30 695.2 1503.40 696.34 L1500.00 698.76 Q1498.4 700.10 1496.80 698.76 L1493.40 696.34 Q1491.50 695.2 1493.40 694.06 Z" fill="#e4e4e4" stroke="#b0b0b0" stroke-width="2.1" stroke-linejoin="round"/><path d="M1493.40 686.16 L1496.80 683.74 Q1498.4 682.40 1500.00 683.74 L1503.40 686.16 Q1505.30 687.3 1503.40 688.44 L1500.00 690.86 Q1498.4 692.20 1496.80 690.86 L1493.40 688.44 Q1491.50 687.3 1493.40 686.16 Z" fill="#fff" stroke="#b0b0b0" stroke-width="2.1" stroke-linejoin="round"/></svg>
<span class="t" style="left:47.9px;top:242px;font-size:17px;color:#b0b0b0;transform:scaleX(0.9687);transform-origin:0 0;">Bring forward</span>
<span class="t" style="left:278.1px;top:242px;font-size:17px;color:#b0b0b0;transform:scaleX(1.0389);transform-origin:0 0;">]</span><svg class="abs" style="left:232px;top:240px;" width="56" height="22" viewBox="1700 682 56 22"><path d="M1735.58 688.23 A1.55 1.55 0 1 0 1734.03 689.78 H1742.13 A1.55 1.55 0 1 0 1740.58 688.23 V696.33 A1.55 1.55 0 1 0 1742.13 694.78 H1734.03 A1.55 1.55 0 1 0 1735.58 696.33 Z" fill="none" stroke="#b0b0b0" stroke-width="1.45" stroke-linejoin="round"/></svg>
<svg class="abs" style="left:13px;top:277px;" width="28" height="26" viewBox="1481 719 28 26"><path d="M1487 725 V735.6 M1483.9 732.4 L1487 735.6 L1490.1 732.4" fill="none" stroke="#b0b0b0" stroke-width="2.1" stroke-linecap="round" stroke-linejoin="round" /><path d="M1493.40 735.16 L1496.80 732.74 Q1498.4 731.40 1500.00 732.74 L1503.40 735.16 Q1505.30 736.3 1503.40 737.44 L1500.00 739.86 Q1498.4 741.20 1496.80 739.86 L1493.40 737.44 Q1491.50 736.3 1493.40 735.16 Z" fill="#fff" stroke="#b0b0b0" stroke-width="2.1" stroke-linejoin="round"/><path d="M1493.40 727.16 L1496.80 724.74 Q1498.4 723.40 1500.00 724.74 L1503.40 727.16 Q1505.30 728.3 1503.40 729.44 L1500.00 731.86 Q1498.4 733.20 1496.80 731.86 L1493.40 729.44 Q1491.50 728.3 1493.40 727.16 Z" fill="#e4e4e4" stroke="#b0b0b0" stroke-width="2.1" stroke-linejoin="round"/></svg>
<span class="t" style="left:47.9px;top:283px;font-size:17px;color:#b0b0b0;transform:scaleX(0.9376);transform-origin:0 0;">Send backward</span>
<span class="t" style="left:278.1px;top:283px;font-size:17px;color:#b0b0b0;transform:scaleX(1.0389);transform-origin:0 0;">[</span><svg class="abs" style="left:232px;top:280px;" width="56" height="22" viewBox="1700 722 56 22"><path d="M1735.58 728.68 A1.55 1.55 0 1 0 1734.03 730.23 H1742.13 A1.55 1.55 0 1 0 1740.58 728.68 V736.78 A1.55 1.55 0 1 0 1742.13 735.23 H1734.03 A1.55 1.55 0 1 0 1735.58 736.78 Z" fill="none" stroke="#b0b0b0" stroke-width="1.45" stroke-linejoin="round"/></svg>
<svg class="abs" style="left:13px;top:318px;" width="28" height="27" viewBox="1481 760 28 27"><path d="M1487 773.3 V783.9 M1483.9 780.6999999999999 L1487 783.9 L1490.1 780.6999999999999" fill="none" stroke="#b0b0b0" stroke-width="2.1" stroke-linecap="round" stroke-linejoin="round" /><path d="M1492.400 772 C1493.400 767 1496 765 1498.400 765 C1500.800 765 1503.400 767 1504.400 772" fill="none" stroke="#b0b0b0" stroke-width="2" stroke-linecap="round" stroke-linejoin="round" stroke-dasharray="0.1 3"/><path d="M1493.40 776.46 L1496.80 774.04 Q1498.4 772.70 1500.00 774.04 L1503.40 776.46 Q1505.30 777.6 1503.40 778.74 L1500.00 781.16 Q1498.4 782.50 1496.80 781.16 L1493.40 778.74 Q1491.50 777.6 1493.40 776.46 Z" fill="#e4e4e4" stroke="#b0b0b0" stroke-width="2.1" stroke-linejoin="round"/></svg>
<span class="t" style="left:47.9px;top:324px;font-size:17px;color:#b0b0b0;transform:scaleX(0.9375);transform-origin:0 0;">Send to back</span>
<span class="t" style="left:278.1px;top:324px;font-size:17px;color:#b0b0b0;transform:scaleX(1.0389);transform-origin:0 0;">[</span><svg class="abs" style="left:232px;top:321px;" width="56" height="22" viewBox="1700 763 56 22"><path d="M1716.96 768.20 H1720.46 L1725.36 778.95 H1729.36 M1724.76 768.20 H1729.36" fill="none" stroke="#b0b0b0" stroke-width="1.45" stroke-linecap="round" stroke-linejoin="round" /><path d="M1735.58 769.43 A1.55 1.55 0 1 0 1734.03 770.98 H1742.13 A1.55 1.55 0 1 0 1740.58 769.43 V777.53 A1.55 1.55 0 1 0 1742.13 775.98 H1734.03 A1.55 1.55 0 1 0 1735.58 777.53 Z" fill="none" stroke="#b0b0b0" stroke-width="1.45" stroke-linejoin="round"/></svg>
<div class="mdiv" style="left:15.400000000000091px;top:357.9px;width:267.400px;height:1.300px"></div>
<svg class="abs" style="left:13px;top:370px;" width="28" height="28" viewBox="1481 812 28 28"><path d="M1495.200 835 H1488.600 C1486.500 835 1485.300 833.800 1485.300 831.700 V827.300 C1485.300 825.200 1486.500 824 1488.600 824 H1494.600" fill="none" stroke="#222" stroke-width="2.3" stroke-linecap="round" stroke-linejoin="round" /><path d="M1488.700 823.800 V820.600 C1488.700 817.800 1490.700 816 1493.300 816 C1495.900 816 1497.600 817.600 1497.900 820.200" fill="none" stroke="#222" stroke-width="2.3" stroke-linecap="round" stroke-linejoin="round" /><path d="M1492.200 828.300 V830.700" fill="none" stroke="#222" stroke-width="2.3" stroke-linecap="round" stroke-linejoin="round" /><path d="M1505.800 827.200 H1498.700 M1501.300 824.600 L1498.500 827.200 L1501.300 829.800" fill="none" stroke="#222" stroke-width="1.9" stroke-linecap="round" stroke-linejoin="round" /><path d="M1497.900 833.500 H1505.300 M1502.700 830.900 L1505.500 833.500 L1502.700 836.100" fill="none" stroke="#222" stroke-width="1.9" stroke-linecap="round" stroke-linejoin="round" /></svg>
<span class="t" style="left:47.9px;top:376px;font-size:17px;color:#222;transform:scaleX(0.9638);transform-origin:0 0;">Lock: Allow image replace</span>
<svg class="abs" style="left:13px;top:411px;" width="28" height="28" viewBox="1481 853 28 28"><rect x="1486.900" y="864.600" width="15.500" height="11.300" rx="3" fill="none" stroke="#222" stroke-width="2.300"/><path d="M1490 864.300 V861.400 C1490 858.600 1492 856.800 1494.650 856.800 C1497.300 856.800 1499.300 858.600 1499.300 861.400 V864.300" fill="none" stroke="#222" stroke-width="2.3" stroke-linecap="round" stroke-linejoin="round" /><path d="M1494.650 868.900 V871.400" fill="none" stroke="#222" stroke-width="2.2" stroke-linecap="round" stroke-linejoin="round" /></svg>
<span class="t" style="left:47.9px;top:416px;font-size:17px;color:#222;transform:scaleX(0.9568);transform-origin:0 0;">Lock</span>
<span class="t" style="left:273.7px;top:416px;font-size:17px;color:#333;transform:scaleX(0.9855);transform-origin:0 0;">L</span><svg class="abs" style="left:232px;top:414px;" width="56" height="22" viewBox="1700 856 56 22"><path d="M1715.43 861.93 A1.55 1.55 0 1 0 1713.88 863.48 H1721.98 A1.55 1.55 0 1 0 1720.43 861.93 V870.03 A1.55 1.55 0 1 0 1721.98 868.48 H1713.88 A1.55 1.55 0 1 0 1715.43 870.03 Z" fill="none" stroke="#333" stroke-width="1.45" stroke-linejoin="round"/><path d="M1733.05 860.40 L1739.20 867.50 H1736.15 V871.80 H1729.95 V867.50 H1726.90 Z" fill="none" stroke="#333" stroke-width="1.45" stroke-linecap="round" stroke-linejoin="round" /></svg>
<div class="mdiv" style="left:15.400000000000091px;top:450.6px;width:267.400px;height:1.300px"></div>
<svg class="abs" style="left:13px;top:463px;" width="28" height="26" viewBox="1481 905 28 26"><path d="M1487.600 908.500 H1501 C1502.900 908.500 1504 909.600 1504 911.500 V918.700 C1504 920.600 1502.900 921.700 1501 921.700 H1493.500 L1488.300 926.300 L1487.700 921.700 H1487.600 C1485.700 921.700 1484.600 920.600 1484.600 918.700 V911.500 C1484.600 909.600 1485.700 908.500 1487.600 908.500 Z" fill="none" stroke="#222" stroke-width="2.3" stroke-linecap="round" stroke-linejoin="round" /></svg>
<span class="t" style="left:47.9px;top:468px;font-size:17px;color:#222;transform:scaleX(0.9824);transform-origin:0 0;">Comment</span>
<span class="t" style="left:271.1px;top:468px;font-size:17px;color:#333;transform:scaleX(0.9718);transform-origin:0 0;">N</span><svg class="abs" style="left:232px;top:465px;" width="56" height="22" viewBox="1700 907 56 22"><path d="M1710.00 912.45 H1713.50 L1718.40 923.20 H1722.40 M1717.80 912.45 H1722.40" fill="none" stroke="#333" stroke-width="1.45" stroke-linecap="round" stroke-linejoin="round" /><path d="M1728.63 913.68 A1.55 1.55 0 1 0 1727.08 915.23 H1735.18 A1.55 1.55 0 1 0 1733.63 913.68 V921.78 A1.55 1.55 0 1 0 1735.18 920.23 H1727.08 A1.55 1.55 0 1 0 1728.63 921.78 Z" fill="none" stroke="#333" stroke-width="1.45" stroke-linejoin="round"/></svg>
<div class="mdiv" style="left:15.400000000000091px;top:502.9px;width:267.400px;height:1.300px"></div>
<svg class="abs" style="left:13px;top:515px;" width="28" height="26" viewBox="1481 957 28 26"><circle cx="1494.300" cy="969.500" r="9.600" fill="none" stroke="#222" stroke-width="2.300"/><circle cx="1494.300" cy="964.800" r="1.350" fill="#222"/><path d="M1494.300 968.300 V974.600" fill="none" stroke="#222" stroke-width="2.2" stroke-linecap="round" stroke-linejoin="round" /></svg>
<span class="t" style="left:47.9px;top:520px;font-size:17px;color:#222;transform:scaleX(0.9361);transform-origin:0 0;">Source Info</span>
</div>

</body>
</html>
